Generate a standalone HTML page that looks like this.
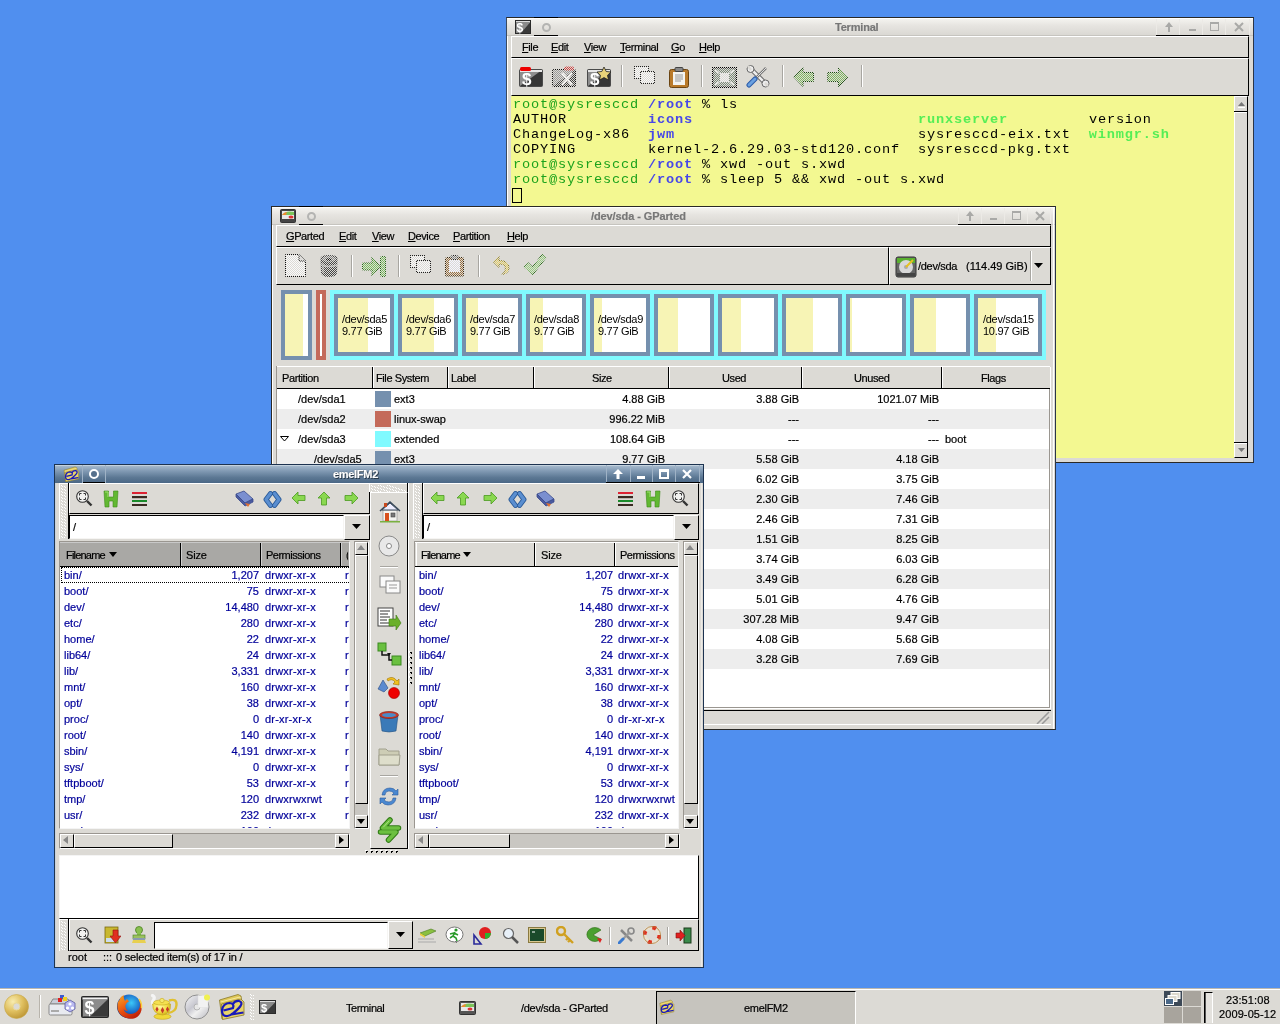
<!DOCTYPE html>
<html><head><meta charset="utf-8">
<style>
*{margin:0;padding:0;box-sizing:border-box}
html,body{width:1280px;height:1024px;overflow:hidden}
body{background:#508fef;font-family:"Liberation Sans",sans-serif;font-size:11px;color:#000;position:relative}
.a{position:absolute}
.win{position:absolute;background:#dcdad5;border:1px solid #1c1c1c;}
.win::before{content:"";position:absolute;left:0;top:0;right:0;bottom:0;border-left:1px solid #fff;border-top:1px solid #fff;pointer-events:none}
.tb{position:absolute;left:0;right:0;top:0;height:18px;background:linear-gradient(#f0efeb,#d8d6d1)}
.tbact{background:linear-gradient(#a6b8cc,#5d7894 60%,#4a6682)}
.bar{position:absolute;background:#dcdad5;border-top:1px solid #fff;border-left:1px solid #fff;border-bottom:1px solid #000;border-right:1px solid #000}
.mono{font-family:"Liberation Mono",monospace}
.t{position:absolute;white-space:pre;line-height:12px;-webkit-text-stroke:0.2px currentColor}
.m{letter-spacing:-0.4px}
u{text-decoration:underline;text-underline-offset:1px}
</style></head><body><div id="root" style="position:absolute;left:0;top:0;width:1280px;height:1024px;will-change:transform;background:#508fef"><svg width="0" height="0" style="position:absolute"><defs><pattern id="chk" width="2" height="2" patternUnits="userSpaceOnUse"><rect width="1" height="1" fill="#fff"/><rect x="1" y="1" width="1" height="1" fill="#fff"/></pattern><mask id="stip" maskUnits="userSpaceOnUse" x="0" y="0" width="64" height="64"><rect width="64" height="64" fill="url(#chk)"/></mask></defs></svg>

<!-- ================= TERMINAL ================= -->
<div class="a" style="left:506px;top:17px;width:748px;height:446px;background:#dcdad5;border:1px solid #2a2926;border-left-color:#3a4a60;border-right-color:#2a3548">
  <div class="a" style="left:0;top:0;width:1px;height:444px;background:#fff"></div>
  <div class="a" style="left:0;top:0;width:746px;height:18px;background:linear-gradient(#f4f3ef,#e6e4e0 40%,#d9d7d2);border-top:1px solid #fff"></div><div class="a" style="left:0;top:17px;width:746px;height:1px;background:#c6c4bf"></div>
  <svg class="a" style="left:8px;top:2px" width="16" height="14"><rect x="0.5" y="0.5" width="15" height="13" fill="#3a3a3a" stroke="#2a2a2a"/><rect x="1" y="1" width="14" height="1.5" fill="#ddd"/><polygon points="1,2.5 15,2.5 6,13 1,13" fill="#8a8a8a"/><text x="1.5" y="12" font-family="Liberation Sans" font-weight="bold" font-size="12" fill="#fff">$</text></svg>
  <div class="a" style="left:27px;top:-1px;width:24px;height:1px;background:#000"></div>
  <div class="a" style="left:27px;top:17px;width:24px;height:1px;background:#000"></div>
  <div class="a" style="left:35px;top:5px;width:9px;height:9px;border:2px solid #b4b4b2;border-radius:50%"></div>
  <div class="t" style="left:328px;top:3px;font-weight:bold;color:#777;letter-spacing:-0.2px">Terminal</div>
  <div class="a" style="left:649px;top:1px;width:93px;height:17px;border-bottom:1px solid #000"></div>
  <div class="a" style="left:649px;top:1px;width:1px;height:16px;background:#eceae6"></div><div class="a" style="left:672px;top:1px;width:1px;height:16px;background:#eceae6"></div><div class="a" style="left:742px;top:1px;width:1px;height:16px;background:#eceae6"></div>
  <div class="a" style="left:695px;top:1px;width:1px;height:16px;background:#eceae6"></div>
  <div class="a" style="left:718px;top:1px;width:1px;height:16px;background:#eceae6"></div>
  <svg class="a" style="left:656px;top:3px" width="12" height="12"><path d="M6 1 L10 6 L7 6 L7 11 L5 11 L5 6 L2 6 Z" fill="#a9a9a7"/></svg>
  <div class="a" style="left:682px;top:11px;width:7px;height:2px;background:#a9a9a7"></div>
  <div class="a" style="left:703px;top:4px;width:9px;height:9px;border:1px solid #a9a9a7;border-top-width:2px"></div>
  <svg class="a" style="left:726px;top:3px" width="12" height="12"><path d="M2 2 L10 10 M10 2 L2 10" stroke="#a9a9a7" stroke-width="2"/></svg>

  <!-- menubar -->
  <div class="a" style="left:4px;top:18px;width:738px;height:22px;border-top:1px solid #fff;border-left:1px solid #fff;border-bottom:1px solid #000;border-right:1px solid #000"></div>
  <div class="t m" style="left:15px;top:23px"><u>F</u>ile</div>
  <div class="t m" style="left:44px;top:23px"><u>E</u>dit</div>
  <div class="t m" style="left:77px;top:23px"><u>V</u>iew</div>
  <div class="t m" style="left:113px;top:23px"><u>T</u>erminal</div>
  <div class="t m" style="left:164px;top:23px"><u>G</u>o</div>
  <div class="t m" style="left:192px;top:23px"><u>H</u>elp</div>

  <!-- toolbar -->
  <div class="a" style="left:4px;top:40px;width:738px;height:38px;border-top:1px solid #fff;border-left:1px solid #fff;border-bottom:1px solid #000;border-right:1px solid #000"></div>
  <svg class="a" style="left:12px;top:49px" width="24" height="20"><rect x="0.5" y="2.5" width="23" height="17" rx="1" fill="#363636" stroke="#4a4a4a"/><polygon points="1,3 23,3 1,19" fill="#8e8e8e"/><rect x="1" y="3" width="22" height="2" fill="#e8e8e8"/><rect x="1" y="0" width="11" height="4" rx="1.5" fill="#e00"/><text x="3" y="18" font-family="Liberation Sans" font-weight="bold" font-size="17" fill="#fff">$</text></svg>
  <svg class="a" style="left:45px;top:48px" width="25" height="22"><g mask="url(#stip)"><rect x="0.5" y="3.5" width="23" height="17" rx="1" fill="#444" stroke="#111"/><polygon points="1,4 23,4 1,20" fill="#999"/><rect x="12" y="0.5" width="10" height="4" rx="1.5" fill="#d04040"/><path d="M10 7 L20 19 M20 7 L10 19" stroke="#fff" stroke-width="2.5"/></g></svg>
  <svg class="a" style="left:80px;top:49px" width="24" height="20"><rect x="0.5" y="2.5" width="23" height="17" rx="1" fill="#363636" stroke="#4a4a4a"/><polygon points="1,3 23,3 1,19" fill="#8e8e8e"/><rect x="1" y="3" width="22" height="2" fill="#e8e8e8"/><text x="3" y="18" font-family="Liberation Sans" font-weight="bold" font-size="17" fill="#fff">$</text><path d="M17 0 L19.2 4.5 L24 5 L20.5 8.3 L21.5 13 L17 10.6 L12.5 13 L13.5 8.3 L10 5 L14.8 4.5 Z" fill="#e8d27a" stroke="#222" stroke-width="0.8"/></svg>
  <div class="a" style="left:114px;top:47px;width:1px;height:22px;background:#a8a6a1;box-shadow:1px 0 #fff"></div>
  <svg class="a" style="left:127px;top:48px" width="23" height="20"><g mask="url(#stip)"><rect x="0.5" y="0.5" width="14" height="12" fill="#f8f8f8" stroke="#222"/><rect x="6.5" y="5.5" width="14" height="12" fill="#f8f8f8" stroke="#222"/></g></svg>
  <svg class="a" style="left:162px;top:49px" width="20" height="22"><rect x="0.5" y="2.5" width="19" height="18" rx="2" fill="#b97a2a" stroke="#6b4512"/><rect x="4" y="5" width="12" height="13" fill="#f4f4f0"/><path d="M6 8h8M6 10h8M6 12h8M6 14h6" stroke="#999"/><rect x="6" y="0.5" width="8" height="4" rx="1" fill="#888" stroke="#444"/></svg>
  <div class="a" style="left:194px;top:47px;width:1px;height:22px;background:#a8a6a1;box-shadow:1px 0 #fff"></div>
  <svg class="a" style="left:205px;top:49px" width="25" height="21"><g mask="url(#stip)"><rect x="0.5" y="0.5" width="24" height="20" fill="#555" stroke="#000"/><rect x="2" y="2" width="21" height="17" fill="#7a8a7a"/><rect x="8" y="6" width="9" height="9" fill="#eee"/><path d="M3 3l4 3M22 3l-4 3M3 18l4-3M22 18l-4-3" stroke="#eee" stroke-width="2"/></g></svg>
  <svg class="a" style="left:239px;top:47px" width="24" height="23"><path d="M5 4 L19 18" stroke="#666" stroke-width="4.5" stroke-linecap="round"/><path d="M5 4 L19 18" stroke="#eee" stroke-width="2.5" stroke-linecap="round"/><circle cx="4.5" cy="4" r="3.5" fill="#eee" stroke="#666"/><path d="M2 1 L5 5" stroke="#dcdad5" stroke-width="2.5"/><circle cx="19.5" cy="18.5" r="3.5" fill="#eee" stroke="#666"/><path d="M22 21 L19 18" stroke="#dcdad5" stroke-width="2.5"/><path d="M20 3 L8 15" stroke="#777" stroke-width="2.5"/><path d="M20 3 L8 15" stroke="#ddd" stroke-width="1"/><path d="M9 14 L3 20" stroke="#2a5aa8" stroke-width="5" stroke-linecap="round"/><path d="M9 14 L3 20" stroke="#6aa0e0" stroke-width="3" stroke-linecap="round"/></svg>
  <div class="a" style="left:275px;top:47px;width:1px;height:22px;background:#a8a6a1;box-shadow:1px 0 #fff"></div>
  <svg class="a" style="left:286px;top:49px" width="22" height="21"><g mask="url(#stip)"><path d="M0.8 10 L10 0.8 L10 5.5 L20.5 5.5 L20.5 14.5 L10 14.5 L10 19.5 Z" fill="#80b860" stroke="#1a4a10"/></g></svg>
  <svg class="a" style="left:320px;top:49px" width="22" height="21"><g mask="url(#stip)"><path d="M20.8 10 L11.5 0.8 L11.5 5.5 L0.8 5.5 L0.8 14.5 L11.5 14.5 L11.5 19.5 Z" fill="#80b860" stroke="#1a4a10"/></g></svg>
  <div class="a" style="left:354px;top:47px;width:1px;height:22px;background:#a8a6a1;box-shadow:1px 0 #fff"></div>

  <!-- text area -->
  <div class="a" style="left:4px;top:78px;width:723px;height:362px;background:#f3f891"></div>
  <div class="a mono" style="left:6px;top:79px;font-size:13.6px;line-height:15px;letter-spacing:0.84px;white-space:pre;color:#000"><span style="color:#1ca21c">root@sysresccd</span> <b style="color:#4848e8">/root</b> % ls
AUTHOR         <b style="color:#4848e8">icons</b>                         <b style="color:#55ee55">runxserver</b>         version
ChangeLog-x86  <b style="color:#4848e8">jwm</b>                           sysresccd-eix.txt  <b style="color:#55ee55">winmgr.sh</b>
COPYING        kernel-2.6.29.03-std120.conf  sysresccd-pkg.txt
<span style="color:#1ca21c">root@sysresccd</span> <b style="color:#4848e8">/root</b> % xwd -out s.xwd
<span style="color:#1ca21c">root@sysresccd</span> <b style="color:#4848e8">/root</b> % sleep 5 &amp;&amp; xwd -out s.xwd
</div>
  <div class="a" style="left:5px;top:170px;width:10px;height:15px;border:1px solid #000"></div>
  <!-- scrollbar -->
  <div class="a" style="left:727px;top:78px;width:14px;height:362px;background:#dcdad5;border-top:1px solid #fff;border-left:1px solid #fff;border-right:1px solid #000;border-bottom:1px solid #000"></div>
  <div class="a" style="left:727px;top:79px;width:14px;height:15px;border-bottom:1px solid #000"></div>
  <svg class="a" style="left:731px;top:84px" width="8" height="6"><path d="M0 4 L3.5 0 L7 4 Z" fill="#777"/><rect x="0" y="5" width="7" height="1" fill="#fff"/></svg>
  <div class="a" style="left:728px;top:94px;width:12px;height:1px;background:#fff"></div>
  <div class="a" style="left:727px;top:424px;width:14px;height:1px;background:#000"></div>
  <div class="a" style="left:728px;top:425px;width:12px;height:1px;background:#fff"></div>
  <svg class="a" style="left:731px;top:430px" width="8" height="6"><path d="M0 0 L7 0 L3.5 4 Z" fill="#777"/></svg>
</div>

<!-- ================= GPARTED ================= -->
<div class="a" style="left:271px;top:206px;width:785px;height:524px;background:#dcdad5;border:1px solid #2a2926;border-right-color:#2a3548">
  <div class="a" style="left:0;top:0;width:1px;height:522px;background:#fff"></div>
  <div class="a" style="left:0;top:0;width:783px;height:18px;background:linear-gradient(#f4f3ef,#e6e4e0 40%,#d9d7d2);border-top:1px solid #fff"></div><div class="a" style="left:0;top:17px;width:783px;height:1px;background:#c6c4bf"></div>
  <svg class="a" style="left:8px;top:2px" width="16" height="14"><rect x="0.5" y="0.5" width="15" height="13" rx="1" fill="#444" stroke="#333"/><rect x="2" y="2" width="12" height="8" fill="#e8e8e8"/><path d="M2 6 Q6 1 14 3 L14 6 Z" fill="#7cc45a"/><path d="M2 6 Q4 3 7 3 L6 6 Z" fill="#f08a30"/><ellipse cx="11" cy="8" rx="2.5" ry="1.5" fill="#d33"/></svg>
  <div class="a" style="left:27px;top:-1px;width:24px;height:1px;background:#000"></div>
  <div class="a" style="left:27px;top:17px;width:24px;height:1px;background:#000"></div>
  <div class="a" style="left:35px;top:5px;width:9px;height:9px;border:2px solid #b4b4b2;border-radius:50%"></div>
  <div class="t" style="left:319px;top:3px;font-weight:bold;color:#777;letter-spacing:-0.1px">/dev/sda - GParted</div>
  <div class="a" style="left:686px;top:1px;width:93px;height:17px;border-bottom:1px solid #000"></div>
  <div class="a" style="left:686px;top:1px;width:1px;height:16px;background:#eceae6"></div><div class="a" style="left:709px;top:1px;width:1px;height:16px;background:#eceae6"></div><div class="a" style="left:778px;top:1px;width:1px;height:16px;background:#eceae6"></div>
  <div class="a" style="left:732px;top:1px;width:1px;height:16px;background:#eceae6"></div>
  <div class="a" style="left:755px;top:1px;width:1px;height:16px;background:#eceae6"></div>
  <svg class="a" style="left:692px;top:3px" width="12" height="12"><path d="M6 1 L10 6 L7 6 L7 11 L5 11 L5 6 L2 6 Z" fill="#a9a9a7"/></svg>
  <div class="a" style="left:718px;top:11px;width:7px;height:2px;background:#a9a9a7"></div>
  <div class="a" style="left:740px;top:4px;width:9px;height:9px;border:1px solid #a9a9a7;border-top-width:2px"></div>
  <svg class="a" style="left:762px;top:3px" width="12" height="12"><path d="M2 2 L10 10 M10 2 L2 10" stroke="#a9a9a7" stroke-width="2"/></svg>

  <div class="a" style="left:4px;top:18px;width:775px;height:22px;border-top:1px solid #fff;border-left:1px solid #fff;border-bottom:1px solid #000;border-right:1px solid #000"></div>
  <div class="t m" style="left:14px;top:23px"><u>G</u>Parted</div>
  <div class="t m" style="left:67px;top:23px"><u>E</u>dit</div>
  <div class="t m" style="left:100px;top:23px"><u>V</u>iew</div>
  <div class="t m" style="left:136px;top:23px"><u>D</u>evice</div>
  <div class="t m" style="left:181px;top:23px"><u>P</u>artition</div>
  <div class="t m" style="left:235px;top:23px"><u>H</u>elp</div>

  <div class="a" style="left:4px;top:40px;width:613px;height:38px;border-top:1px solid #fff;border-left:1px solid #fff;border-bottom:1px solid #000;border-right:1px solid #000"></div>
  <div class="a" style="left:617px;top:40px;width:162px;height:38px;border-top:1px solid #fff;border-left:1px solid #fff;border-bottom:1px solid #000;border-right:1px solid #000"></div>
  <svg class="a" style="left:13px;top:47px" width="21" height="24"><g mask="url(#stip)"><path d="M0.5 0.5 L14 0.5 L20.5 7 L20.5 22.5 L0.5 22.5 Z" fill="#fafafa" stroke="#111"/><path d="M14 0.5 L14 7 L20.5 7" fill="#ddd" stroke="#111"/></g></svg>
  <svg class="a" style="left:47px;top:47px" width="21" height="24"><g mask="url(#stip)"><path d="M1.5 5 Q1 1 10 1 Q19 1 18.5 5 L18 19 Q17 23 10 23 Q3 23 2 19 Z" fill="#444"/><ellipse cx="10" cy="5" rx="7" ry="3" fill="#888"/><ellipse cx="10" cy="5.5" rx="3" ry="1.3" fill="#111"/><path d="M2 11 Q10 14 18 11" stroke="#aaa" stroke-width="1.5" fill="none"/><path d="M4 9 L4 19" stroke="#999" stroke-width="1.5"/></g></svg>
  <div class="a" style="left:79px;top:48px;width:1px;height:22px;background:#a8a6a1;box-shadow:1px 0 #fff"></div>
  <svg class="a" style="left:90px;top:49px" width="25" height="22"><g mask="url(#stip)"><path d="M0.5 7 L10 7 L10 1 L18 10.5 L10 20 L10 14 L0.5 14 Z" fill="#7cc060" stroke="#2a6a1a"/><rect x="18.5" y="0.5" width="5" height="20" rx="1" fill="#7cc060" stroke="#2a6a1a"/></g></svg>
  <div class="a" style="left:126px;top:48px;width:1px;height:22px;background:#a8a6a1;box-shadow:1px 0 #fff"></div>
  <svg class="a" style="left:138px;top:48px" width="23" height="19"><g mask="url(#stip)"><rect x="0.5" y="0.5" width="14" height="12" fill="#f8f8f8" stroke="#222"/><rect x="6.5" y="5.5" width="14" height="12" fill="#f8f8f8" stroke="#222"/></g></svg>
  <svg class="a" style="left:173px;top:48px" width="20" height="22"><g mask="url(#stip)"><rect x="0.5" y="2.5" width="18" height="18.5" rx="1" fill="#9a7040" stroke="#3a2a10"/><rect x="4" y="5" width="11" height="12" fill="#f4f4ff"/><rect x="6" y="0.5" width="7" height="4" rx="1.5" fill="#888" stroke="#222"/></g></svg>
  <div class="a" style="left:206px;top:48px;width:1px;height:22px;background:#a8a6a1;box-shadow:1px 0 #fff"></div>
  <svg class="a" style="left:221px;top:49px" width="17" height="20"><g mask="url(#stip)"><path d="M6 0.5 L0.5 6 L6 11.5 L6 8 Q12.5 8 12.5 12.5 Q12.5 16 9 18.5 Q16 17.5 16 12 Q16 4.5 6 4.5 Z" fill="#e8d060" stroke="#8a7a20"/></g></svg>
  <svg class="a" style="left:251px;top:46px" width="24" height="24"><g mask="url(#stip)"><path d="M0.8 14 L5 9.5 L9.5 14 L19.5 1 L23.2 4.5 L9.5 22 Z" fill="#98d080" stroke="#2a6a1a"/></g></svg>
  <svg class="a" style="left:623px;top:49px" width="22" height="22"><rect x="1" y="1" width="20" height="20" rx="2" fill="#666" stroke="#333"/><rect x="2" y="2" width="18" height="5" fill="#5ab030"/><circle cx="11" cy="11" r="7" fill="#d8d8d8"/><circle cx="11" cy="11" r="2" fill="#aaa"/><path d="M11 11 L18 4" stroke="#e8c020" stroke-width="2"/><rect x="2" y="17" width="18" height="3" fill="#444"/></svg>
  <div class="t" style="left:646px;top:53px;letter-spacing:-0.3px">/dev/sda</div><div class="t" style="left:694px;top:53px">(114.49 GiB)</div>
  <div class="a" style="left:758px;top:44px;width:1px;height:30px;background:#a8a6a1;box-shadow:1px 0 #fff"></div>
  <svg class="a" style="left:762px;top:56px" width="10" height="6"><path d="M0 0 L9 0 L4.5 5 Z" fill="#000"/></svg>

  <div class="a" style="left:9px;top:83px;width:31px;height:70px;border:4px solid #7590ae;background:linear-gradient(90deg,#f7f4b5 18px,#fff 18px)"></div>
<div class="a" style="left:44px;top:83px;width:10px;height:70px;border:4px solid #c46a5a;background:#fff"></div>
<div class="a" style="left:58px;top:83px;width:716px;height:70px;background:#80faff"></div>
<div class="a" style="left:62px;top:87px;width:60px;height:62px;border:4px solid #7590ae;background:linear-gradient(90deg,#f7f4b5 30px,#fff 30px)"></div>
<div class="a" style="left:126px;top:87px;width:60px;height:62px;border:4px solid #7590ae;background:linear-gradient(90deg,#f7f4b5 32px,#fff 32px)"></div>
<div class="a" style="left:190px;top:87px;width:60px;height:62px;border:4px solid #7590ae;background:linear-gradient(90deg,#f7f4b5 12px,#fff 12px)"></div>
<div class="a" style="left:254px;top:87px;width:60px;height:62px;border:4px solid #7590ae;background:linear-gradient(90deg,#f7f4b5 13px,#fff 13px)"></div>
<div class="a" style="left:318px;top:87px;width:60px;height:62px;border:4px solid #7590ae;background:linear-gradient(90deg,#f7f4b5 8px,#fff 8px)"></div>
<div class="a" style="left:382px;top:87px;width:60px;height:62px;border:4px solid #7590ae;background:linear-gradient(90deg,#f7f4b5 20px,#fff 20px)"></div>
<div class="a" style="left:446px;top:87px;width:60px;height:62px;border:4px solid #7590ae;background:linear-gradient(90deg,#f7f4b5 19px,#fff 19px)"></div>
<div class="a" style="left:510px;top:87px;width:60px;height:62px;border:4px solid #7590ae;background:linear-gradient(90deg,#f7f4b5 27px,#fff 27px)"></div>
<div class="a" style="left:574px;top:87px;width:60px;height:62px;border:4px solid #7590ae;background:linear-gradient(90deg,#f7f4b5 2px,#fff 2px)"></div>
<div class="a" style="left:638px;top:87px;width:60px;height:62px;border:4px solid #7590ae;background:linear-gradient(90deg,#f7f4b5 22px,#fff 22px)"></div>
<div class="a" style="left:702px;top:87px;width:68px;height:62px;border:4px solid #7590ae;background:linear-gradient(90deg,#f7f4b5 18px,#fff 18px)"></div>
<div class="a" style="left:70px;top:106px;line-height:12px;letter-spacing:-0.3px">/dev/sda5<br>9.77 GiB</div>
<div class="a" style="left:134px;top:106px;line-height:12px;letter-spacing:-0.3px">/dev/sda6<br>9.77 GiB</div>
<div class="a" style="left:198px;top:106px;line-height:12px;letter-spacing:-0.3px">/dev/sda7<br>9.77 GiB</div>
<div class="a" style="left:262px;top:106px;line-height:12px;letter-spacing:-0.3px">/dev/sda8<br>9.77 GiB</div>
<div class="a" style="left:326px;top:106px;line-height:12px;letter-spacing:-0.3px">/dev/sda9<br>9.77 GiB</div>
<div class="a" style="left:711px;top:106px;line-height:12px;letter-spacing:-0.3px">/dev/sda15<br>10.97 GiB</div>


  <!-- list -->
  <div class="a" style="left:4px;top:159px;width:774px;height:342px;background:#fff;border:1px solid #9a9690;box-shadow:1px 1px 0 #fff"></div>
  <div class="a" style="left:5px;top:159px;width:773px;height:23px;background:#dcdad5;border-top:1px solid #fff;border-bottom:1px solid #000"></div>
  <div class="a" style="left:100px;top:160px;width:1px;height:21px;background:#000;box-shadow:1px 0 #fff"></div>
  <div class="a" style="left:175px;top:160px;width:1px;height:21px;background:#000;box-shadow:1px 0 #fff"></div>
  <div class="a" style="left:261px;top:160px;width:1px;height:21px;background:#000;box-shadow:1px 0 #fff"></div>
  <div class="a" style="left:396px;top:160px;width:1px;height:21px;background:#000;box-shadow:1px 0 #fff"></div>
  <div class="a" style="left:529px;top:160px;width:1px;height:21px;background:#000;box-shadow:1px 0 #fff"></div>
  <div class="a" style="left:669px;top:160px;width:1px;height:21px;background:#000;box-shadow:1px 0 #fff"></div>
  <div class="t m" style="left:10px;top:165px">Partition</div>
  <div class="t m" style="left:104px;top:165px">File System</div>
  <div class="t m" style="left:179px;top:165px">Label</div>
  <div class="t m" style="left:320px;top:165px">Size</div>
  <div class="t m" style="left:450px;top:165px">Used</div>
  <div class="t m" style="left:582px;top:165px">Unused</div>
  <div class="t m" style="left:709px;top:165px">Flags</div>
  <div class="a" style="left:5px;top:182px;width:772px;height:20px;background:#fff"></div>
<div class="t" style="left:26px;top:186px">/dev/sda1</div><div class="a" style="left:103px;top:184px;width:16px;height:16px;background:#7590ae"></div><div class="t" style="left:122px;top:186px">ext3</div><div class="t" style="right:390px;top:186px;text-align:right">4.88 GiB</div><div class="t" style="right:256px;top:186px;text-align:right">3.88 GiB</div><div class="t" style="right:116px;top:186px;text-align:right">1021.07 MiB</div>
<div class="a" style="left:5px;top:202px;width:772px;height:20px;background:#ededed"></div>
<div class="t" style="left:26px;top:206px">/dev/sda2</div><div class="a" style="left:103px;top:204px;width:16px;height:16px;background:#c46a5a"></div><div class="t" style="left:122px;top:206px">linux-swap</div><div class="t" style="right:390px;top:206px;text-align:right">996.22 MiB</div><div class="t" style="right:256px;top:206px;text-align:right">---</div><div class="t" style="right:116px;top:206px;text-align:right">---</div>
<div class="a" style="left:5px;top:222px;width:772px;height:20px;background:#fff"></div>
<div class="t" style="left:26px;top:226px">/dev/sda3</div><div class="a" style="left:103px;top:224px;width:16px;height:16px;background:#80faff"></div><div class="t" style="left:122px;top:226px">extended</div><div class="t" style="right:390px;top:226px;text-align:right">108.64 GiB</div><div class="t" style="right:256px;top:226px;text-align:right">---</div><div class="t" style="right:116px;top:226px;text-align:right">---</div><div class="t" style="left:673px;top:226px">boot</div>
<div class="a" style="left:5px;top:242px;width:772px;height:20px;background:#ededed"></div>
<div class="t" style="left:42px;top:246px">/dev/sda5</div><div class="a" style="left:103px;top:244px;width:16px;height:16px;background:#7590ae"></div><div class="t" style="left:122px;top:246px">ext3</div><div class="t" style="right:390px;top:246px;text-align:right">9.77 GiB</div><div class="t" style="right:256px;top:246px;text-align:right">5.58 GiB</div><div class="t" style="right:116px;top:246px;text-align:right">4.18 GiB</div>
<div class="a" style="left:5px;top:262px;width:772px;height:20px;background:#fff"></div>
<div class="t" style="left:42px;top:266px">/dev/sda6</div><div class="a" style="left:103px;top:264px;width:16px;height:16px;background:#7590ae"></div><div class="t" style="left:122px;top:266px">ext3</div><div class="t" style="right:390px;top:266px;text-align:right">9.77 GiB</div><div class="t" style="right:256px;top:266px;text-align:right">6.02 GiB</div><div class="t" style="right:116px;top:266px;text-align:right">3.75 GiB</div>
<div class="a" style="left:5px;top:282px;width:772px;height:20px;background:#ededed"></div>
<div class="t" style="left:42px;top:286px">/dev/sda7</div><div class="a" style="left:103px;top:284px;width:16px;height:16px;background:#7590ae"></div><div class="t" style="left:122px;top:286px">ext3</div><div class="t" style="right:390px;top:286px;text-align:right">9.77 GiB</div><div class="t" style="right:256px;top:286px;text-align:right">2.30 GiB</div><div class="t" style="right:116px;top:286px;text-align:right">7.46 GiB</div>
<div class="a" style="left:5px;top:302px;width:772px;height:20px;background:#fff"></div>
<div class="t" style="left:42px;top:306px">/dev/sda8</div><div class="a" style="left:103px;top:304px;width:16px;height:16px;background:#7590ae"></div><div class="t" style="left:122px;top:306px">ext3</div><div class="t" style="right:390px;top:306px;text-align:right">9.77 GiB</div><div class="t" style="right:256px;top:306px;text-align:right">2.46 GiB</div><div class="t" style="right:116px;top:306px;text-align:right">7.31 GiB</div>
<div class="a" style="left:5px;top:322px;width:772px;height:20px;background:#ededed"></div>
<div class="t" style="left:42px;top:326px">/dev/sda9</div><div class="a" style="left:103px;top:324px;width:16px;height:16px;background:#7590ae"></div><div class="t" style="left:122px;top:326px">ext3</div><div class="t" style="right:390px;top:326px;text-align:right">9.77 GiB</div><div class="t" style="right:256px;top:326px;text-align:right">1.51 GiB</div><div class="t" style="right:116px;top:326px;text-align:right">8.25 GiB</div>
<div class="a" style="left:5px;top:342px;width:772px;height:20px;background:#fff"></div>
<div class="t" style="left:42px;top:346px">/dev/sda10</div><div class="a" style="left:103px;top:344px;width:16px;height:16px;background:#7590ae"></div><div class="t" style="left:122px;top:346px">ext3</div><div class="t" style="right:390px;top:346px;text-align:right">9.77 GiB</div><div class="t" style="right:256px;top:346px;text-align:right">3.74 GiB</div><div class="t" style="right:116px;top:346px;text-align:right">6.03 GiB</div>
<div class="a" style="left:5px;top:362px;width:772px;height:20px;background:#ededed"></div>
<div class="t" style="left:42px;top:366px">/dev/sda11</div><div class="a" style="left:103px;top:364px;width:16px;height:16px;background:#7590ae"></div><div class="t" style="left:122px;top:366px">ext3</div><div class="t" style="right:390px;top:366px;text-align:right">9.77 GiB</div><div class="t" style="right:256px;top:366px;text-align:right">3.49 GiB</div><div class="t" style="right:116px;top:366px;text-align:right">6.28 GiB</div>
<div class="a" style="left:5px;top:382px;width:772px;height:20px;background:#fff"></div>
<div class="t" style="left:42px;top:386px">/dev/sda12</div><div class="a" style="left:103px;top:384px;width:16px;height:16px;background:#7590ae"></div><div class="t" style="left:122px;top:386px">ext3</div><div class="t" style="right:390px;top:386px;text-align:right">9.77 GiB</div><div class="t" style="right:256px;top:386px;text-align:right">5.01 GiB</div><div class="t" style="right:116px;top:386px;text-align:right">4.76 GiB</div>
<div class="a" style="left:5px;top:402px;width:772px;height:20px;background:#ededed"></div>
<div class="t" style="left:42px;top:406px">/dev/sda13</div><div class="a" style="left:103px;top:404px;width:16px;height:16px;background:#7590ae"></div><div class="t" style="left:122px;top:406px">ext3</div><div class="t" style="right:390px;top:406px;text-align:right">9.77 GiB</div><div class="t" style="right:256px;top:406px;text-align:right">307.28 MiB</div><div class="t" style="right:116px;top:406px;text-align:right">9.47 GiB</div>
<div class="a" style="left:5px;top:422px;width:772px;height:20px;background:#fff"></div>
<div class="t" style="left:42px;top:426px">/dev/sda14</div><div class="a" style="left:103px;top:424px;width:16px;height:16px;background:#7590ae"></div><div class="t" style="left:122px;top:426px">ext3</div><div class="t" style="right:390px;top:426px;text-align:right">9.77 GiB</div><div class="t" style="right:256px;top:426px;text-align:right">4.08 GiB</div><div class="t" style="right:116px;top:426px;text-align:right">5.68 GiB</div>
<div class="a" style="left:5px;top:442px;width:772px;height:20px;background:#ededed"></div>
<div class="t" style="left:42px;top:446px">/dev/sda15</div><div class="a" style="left:103px;top:444px;width:16px;height:16px;background:#7590ae"></div><div class="t" style="left:122px;top:446px">ext3</div><div class="t" style="right:390px;top:446px;text-align:right">10.97 GiB</div><div class="t" style="right:256px;top:446px;text-align:right">3.28 GiB</div><div class="t" style="right:116px;top:446px;text-align:right">7.69 GiB</div>

  <svg class="a" style="left:8px;top:229px" width="10" height="7"><path d="M0.5 0.5 L8.5 0.5 L4.5 5 Z" fill="none" stroke="#000"/></svg>

  <!-- statusbar -->
  <div class="a" style="left:4px;top:503px;width:775px;height:15px;border-top:1px solid #000;border-bottom:1px solid #fff"></div>
  <svg class="a" style="left:764px;top:504px" width="14" height="13"><path d="M13 1 L1 13 M13 6 L6 13" stroke="#999" stroke-width="1.5"/></svg>
  <div class="a" style="left:781px;top:0;width:1px;height:522px;background:#fff"></div>
</div>

<!-- ================= EMELFM2 ================= -->
<div class="a" style="left:54px;top:464px;width:650px;height:504px;background:#dcdad5;border:1px solid #1d3350;"></div>
<div class="a" style="left:55px;top:465px;width:1px;height:502px;background:#c8d2dc"></div>
<div class="a" style="left:55px;top:465px;width:648px;height:18px;background:linear-gradient(#aabdd0,#7f98b2 35%,#5b7793 70%,#4b6785);"></div>
<div class="a" style="left:55px;top:465px;width:648px;height:1px;background:#c4d2de"></div>
<svg class="a" style="left:63px;top:466px" width="17" height="16" viewBox="0 0 28 27"><path d="M1.5 7 L20 1.5 L23 3 L25.5 20 L4 26 Z" fill="#e0c858" stroke="#8a7a28" stroke-width="0.8"/><path d="M2.5 9 L22 4 L24.5 21" fill="none" stroke="#f4e8a0" stroke-width="1"/><path d="M3.5 11 L23 6 L26 9 L26 22 L4.5 26.5 Z" fill="#e8d468" stroke="#8a7a28" stroke-width="0.8"/><path d="M5.5 17.5 L15 15 Q16.5 10 11.5 10 Q5 10.5 4 17 Q3.5 23.5 9.5 23 Q12.5 22.5 14.5 20.5" stroke="#1a1ab8" stroke-width="2.2" fill="none"/><path d="M14.5 11.5 Q17 7.5 21 8 Q25 9 22.5 13 Q20 16.5 13.5 21.5 L25.5 19.5" stroke="#1a1ab8" stroke-width="2.2" fill="none"/></svg>
<div class="a" style="left:82px;top:465px;width:1px;height:18px;background:#9fb2c6"></div>
<div class="a" style="left:105px;top:465px;width:1px;height:18px;background:#9fb2c6"></div>
<div class="a" style="left:83px;top:482px;width:22px;height:1px;background:#000"></div>
<div class="a" style="left:89px;top:469px;width:10px;height:10px;border:2.5px solid #fff;border-radius:50%;background:#56708c"></div>
<div class="t" style="left:333px;top:468px;font-weight:bold;color:#fff;letter-spacing:-0.3px;text-shadow:0 0 1px #203040,1px 1px 0 #2a3a4a">emelFM2</div>
<div class="a" style="left:606px;top:465px;width:1px;height:18px;background:#9fb2c6"></div>
<div class="a" style="left:630px;top:465px;width:1px;height:18px;background:#9fb2c6"></div>
<div class="a" style="left:652px;top:465px;width:1px;height:18px;background:#9fb2c6"></div>
<div class="a" style="left:675px;top:465px;width:1px;height:18px;background:#9fb2c6"></div>
<div class="a" style="left:699px;top:465px;width:1px;height:18px;background:#9fb2c6"></div>
<div class="a" style="left:606px;top:482px;width:94px;height:1px;background:#000"></div>
<svg class="a" style="left:612px;top:468px" width="12" height="12"><path d="M6 1 L11 6 L7.5 6 L7.5 11 L4.5 11 L4.5 6 L1 6 Z" fill="#fff"/></svg>
<div class="a" style="left:637px;top:476px;width:8px;height:3px;background:#fff"></div>
<div class="a" style="left:659px;top:469px;width:10px;height:10px;border:2px solid #fff;border-top-width:3px"></div>
<svg class="a" style="left:681px;top:468px" width="12" height="12"><path d="M2 2 L10 10 M10 2 L2 10" stroke="#fff" stroke-width="2.2"/></svg>
<div class="a" style="left:59px;top:483px;width:10px;height:56px;background:#dcdad5"></div>
<div class="a" style="left:59px;top:483px;width:1px;height:56px;background:#fff"></div>
<div class="a" style="left:59px;top:483px;width:9px;height:1px;background:#fff"></div>
<svg class="a" style="left:61px;top:485px" width="6" height="53"><path fill="#fff" d="M0 0h1v1h-1zM1 1h1v1h-1zM0 3h1v1h-1zM1 4h1v1h-1zM0 6h1v1h-1zM1 7h1v1h-1zM0 9h1v1h-1zM1 10h1v1h-1zM0 12h1v1h-1zM1 13h1v1h-1zM0 15h1v1h-1zM1 16h1v1h-1zM0 18h1v1h-1zM1 19h1v1h-1zM0 21h1v1h-1zM1 22h1v1h-1zM0 24h1v1h-1zM1 25h1v1h-1zM0 27h1v1h-1zM1 28h1v1h-1zM0 30h1v1h-1zM1 31h1v1h-1zM0 33h1v1h-1zM1 34h1v1h-1zM0 36h1v1h-1zM1 37h1v1h-1zM0 39h1v1h-1zM1 40h1v1h-1zM0 42h1v1h-1zM1 43h1v1h-1zM0 45h1v1h-1zM1 46h1v1h-1zM0 48h1v1h-1zM1 49h1v1h-1zM0 51h1v1h-1zM1 52h1v1h-1zM3 1h1v1h-1zM4 2h1v1h-1zM3 4h1v1h-1zM4 5h1v1h-1zM3 7h1v1h-1zM4 8h1v1h-1zM3 10h1v1h-1zM4 11h1v1h-1zM3 13h1v1h-1zM4 14h1v1h-1zM3 16h1v1h-1zM4 17h1v1h-1zM3 19h1v1h-1zM4 20h1v1h-1zM3 22h1v1h-1zM4 23h1v1h-1zM3 25h1v1h-1zM4 26h1v1h-1zM3 28h1v1h-1zM4 29h1v1h-1zM3 31h1v1h-1zM4 32h1v1h-1zM3 34h1v1h-1zM4 35h1v1h-1zM3 37h1v1h-1zM4 38h1v1h-1zM3 40h1v1h-1zM4 41h1v1h-1zM3 43h1v1h-1zM4 44h1v1h-1zM3 46h1v1h-1zM4 47h1v1h-1zM3 49h1v1h-1zM4 50h1v1h-1zM3 52h1v1h-1z"/></svg>
<div class="a" style="left:68px;top:483px;width:1px;height:56px;background:#000"></div>
<div class="a" style="left:69px;top:483px;width:301px;height:31px;background:#dcdad5;border-top:1px solid #fff;border-left:1px solid #fff;border-bottom:1px solid #000;border-right:1px solid #000;"></div>
<div class="a" style="left:69px;top:515px;width:275px;height:24px;background:#fff;border-top:1px solid #000;border-left:1px solid #000;border-bottom:1px solid #f6f5f3;border-right:1px solid #f6f5f3;"></div>
<div class="t" style="left:73px;top:521px;">/</div>
<div class="a" style="left:344px;top:515px;width:26px;height:25px;background:#dcdad5;border-top:1px solid #fff;border-left:1px solid #fff;border-bottom:1px solid #000;border-right:1px solid #000;"></div>
<svg class="a" style="left:352px;top:524px" width="10" height="6"><path d="M0 0 L9 0 L4.5 5 Z" fill="#000"/></svg>
<svg class="a" style="left:76px;top:490px" width="17" height="17"><circle cx="6.5" cy="6.5" r="5.8" fill="#f2f2f0" stroke="#333" stroke-width="1.1"/><path d="M3.5 5.5V3.5h2M7.5 3.5h2v2M9.5 7.5v2h-2M5.5 9.5h-2v-2" stroke="#333" stroke-width="1" fill="none"/><path d="M11 11 L15.5 15.5" stroke="#333" stroke-width="2.4"/></svg>
<svg class="a" style="left:103px;top:490px" width="16" height="18"><path d="M1 1 L5.5 1 L5.5 7 L10.5 7 L10.5 1 L15 1 L14 17 L10 17 L10 11 L6 11 L6 17 L2 17 Z" fill="#62b832" stroke="#3d8a1a" stroke-width="0.6"/><path d="M2 2h3v5" stroke="#9ee070" fill="none"/></svg>
<svg class="a" style="left:132px;top:492px" width="15" height="14"><rect x="0" y="0" width="15" height="2" fill="#d23"/><rect x="0" y="4" width="15" height="2.2" fill="#3a2a22"/><rect x="0" y="8" width="15" height="2" fill="#1a8a2a"/><rect x="0" y="12" width="15" height="2" fill="#3a2a22"/></svg>
<svg class="a" style="left:235px;top:490px" width="19" height="17"><path d="M1 4 L9 1 L18 9 L10 13 Z" fill="#7a8fd0" stroke="#3a4a8a" stroke-width="0.8"/><path d="M1 4 L1 7 L10 16 L18 12 L18 9 L10 13 Z" fill="#4a5aa0" stroke="#3a4a8a" stroke-width="0.8"/><path d="M10 13 L13 17 L15 14" fill="#e07030"/></svg>
<svg class="a" style="left:263px;top:491px" width="19" height="17"><g fill="none" stroke-linecap="round" stroke-linejoin="round"><path d="M7.5 2.5 L3 8.5 L7.5 14.5 M11.5 2.5 L16 8.5 L11.5 14.5" stroke="#2a5a98" stroke-width="5"/><path d="M7.5 2.5 L3 8.5 L7.5 14.5 M11.5 2.5 L16 8.5 L11.5 14.5" stroke="#5a8ed0" stroke-width="3.2"/></g></svg>
<svg class="a" style="left:291px;top:491px" width="15" height="14"><path d="M1 7 L7 1 L7 4.5 L14 4.5 L14 9.5 L7 9.5 L7 13 Z" fill="#8ad850" stroke="#4a9a20" stroke-width="0.8"/></svg>
<svg class="a" style="left:317px;top:491px" width="14" height="15"><path d="M7 1 L13 7 L9.5 7 L9.5 14 L4.5 14 L4.5 7 L1 7 Z" fill="#8ad850" stroke="#4a9a20" stroke-width="0.8"/></svg>
<svg class="a" style="left:344px;top:491px" width="15" height="14"><path d="M14 7 L8 1 L8 4.5 L1 4.5 L1 9.5 L8 9.5 L8 13 Z" fill="#8ad850" stroke="#4a9a20" stroke-width="0.8"/></svg>
<div class="a" style="left:59px;top:541px;width:291px;height:288px;background:#fff;border:1px solid #9a9690;border-right-color:#f4f4f4;border-bottom-color:#f4f4f4"></div>
<div class="a" style="left:60px;top:542px;width:289px;height:25px;background:#a9a8a5;border-top:1px solid #c8c8c8;border-bottom:1px solid #000"></div>
<div class="a" style="left:180px;top:543px;width:1px;height:23px;background:#000"></div>
<div class="a" style="left:181px;top:543px;width:1px;height:23px;background:#cfcfcf"></div>
<div class="a" style="left:260px;top:543px;width:1px;height:23px;background:#000"></div>
<div class="a" style="left:261px;top:543px;width:1px;height:23px;background:#cfcfcf"></div>
<div class="a" style="left:340px;top:543px;width:1px;height:23px;background:#000"></div>
<div class="a" style="left:341px;top:543px;width:1px;height:23px;background:#cfcfcf"></div>
<div class="t" style="left:66px;top:549px;letter-spacing:-0.8px">Filename</div>
<svg class="a" style="left:109px;top:552px" width="9" height="6"><path d="M0 0 L8 0 L4 5 Z" fill="#000"/></svg>
<div class="t" style="left:186px;top:549px;letter-spacing:-0.2px">Size</div>
<div class="t" style="left:266px;top:549px;letter-spacing:-0.5px">Permissions</div>
<div class="a" style="left:342px;top:543px;width:6px;height:22px;overflow:hidden"><div class="t" style="left:4px;top:6px">(</div></div>
<div class="a" style="left:60px;top:567px;width:289px;height:261px;overflow:hidden">
<div class="t" style="left:4px;top:2px;color:#00009a;-webkit-text-stroke:0.2px #00009a;">bin/</div><div class="t" style="left:-1px;width:200px;text-align:right;top:2px;color:#00009a;-webkit-text-stroke:0.2px #00009a;">1,207</div><div class="t" style="left:205px;top:2px;color:#00009a;-webkit-text-stroke:0.2px #00009a;letter-spacing:0.2px">drwxr-xr-x</div><div class="t" style="left:285px;top:2px;color:#00009a;-webkit-text-stroke:0.2px #00009a;">r</div>
<div class="t" style="left:4px;top:18px;color:#00009a;-webkit-text-stroke:0.2px #00009a;">boot/</div><div class="t" style="left:-1px;width:200px;text-align:right;top:18px;color:#00009a;-webkit-text-stroke:0.2px #00009a;">75</div><div class="t" style="left:205px;top:18px;color:#00009a;-webkit-text-stroke:0.2px #00009a;letter-spacing:0.2px">drwxr-xr-x</div><div class="t" style="left:285px;top:18px;color:#00009a;-webkit-text-stroke:0.2px #00009a;">r</div>
<div class="t" style="left:4px;top:34px;color:#00009a;-webkit-text-stroke:0.2px #00009a;">dev/</div><div class="t" style="left:-1px;width:200px;text-align:right;top:34px;color:#00009a;-webkit-text-stroke:0.2px #00009a;">14,480</div><div class="t" style="left:205px;top:34px;color:#00009a;-webkit-text-stroke:0.2px #00009a;letter-spacing:0.2px">drwxr-xr-x</div><div class="t" style="left:285px;top:34px;color:#00009a;-webkit-text-stroke:0.2px #00009a;">r</div>
<div class="t" style="left:4px;top:50px;color:#00009a;-webkit-text-stroke:0.2px #00009a;">etc/</div><div class="t" style="left:-1px;width:200px;text-align:right;top:50px;color:#00009a;-webkit-text-stroke:0.2px #00009a;">280</div><div class="t" style="left:205px;top:50px;color:#00009a;-webkit-text-stroke:0.2px #00009a;letter-spacing:0.2px">drwxr-xr-x</div><div class="t" style="left:285px;top:50px;color:#00009a;-webkit-text-stroke:0.2px #00009a;">r</div>
<div class="t" style="left:4px;top:66px;color:#00009a;-webkit-text-stroke:0.2px #00009a;">home/</div><div class="t" style="left:-1px;width:200px;text-align:right;top:66px;color:#00009a;-webkit-text-stroke:0.2px #00009a;">22</div><div class="t" style="left:205px;top:66px;color:#00009a;-webkit-text-stroke:0.2px #00009a;letter-spacing:0.2px">drwxr-xr-x</div><div class="t" style="left:285px;top:66px;color:#00009a;-webkit-text-stroke:0.2px #00009a;">r</div>
<div class="t" style="left:4px;top:82px;color:#00009a;-webkit-text-stroke:0.2px #00009a;">lib64/</div><div class="t" style="left:-1px;width:200px;text-align:right;top:82px;color:#00009a;-webkit-text-stroke:0.2px #00009a;">24</div><div class="t" style="left:205px;top:82px;color:#00009a;-webkit-text-stroke:0.2px #00009a;letter-spacing:0.2px">drwxr-xr-x</div><div class="t" style="left:285px;top:82px;color:#00009a;-webkit-text-stroke:0.2px #00009a;">r</div>
<div class="t" style="left:4px;top:98px;color:#00009a;-webkit-text-stroke:0.2px #00009a;">lib/</div><div class="t" style="left:-1px;width:200px;text-align:right;top:98px;color:#00009a;-webkit-text-stroke:0.2px #00009a;">3,331</div><div class="t" style="left:205px;top:98px;color:#00009a;-webkit-text-stroke:0.2px #00009a;letter-spacing:0.2px">drwxr-xr-x</div><div class="t" style="left:285px;top:98px;color:#00009a;-webkit-text-stroke:0.2px #00009a;">r</div>
<div class="t" style="left:4px;top:114px;color:#00009a;-webkit-text-stroke:0.2px #00009a;">mnt/</div><div class="t" style="left:-1px;width:200px;text-align:right;top:114px;color:#00009a;-webkit-text-stroke:0.2px #00009a;">160</div><div class="t" style="left:205px;top:114px;color:#00009a;-webkit-text-stroke:0.2px #00009a;letter-spacing:0.2px">drwxr-xr-x</div><div class="t" style="left:285px;top:114px;color:#00009a;-webkit-text-stroke:0.2px #00009a;">r</div>
<div class="t" style="left:4px;top:130px;color:#00009a;-webkit-text-stroke:0.2px #00009a;">opt/</div><div class="t" style="left:-1px;width:200px;text-align:right;top:130px;color:#00009a;-webkit-text-stroke:0.2px #00009a;">38</div><div class="t" style="left:205px;top:130px;color:#00009a;-webkit-text-stroke:0.2px #00009a;letter-spacing:0.2px">drwxr-xr-x</div><div class="t" style="left:285px;top:130px;color:#00009a;-webkit-text-stroke:0.2px #00009a;">r</div>
<div class="t" style="left:4px;top:146px;color:#00009a;-webkit-text-stroke:0.2px #00009a;">proc/</div><div class="t" style="left:-1px;width:200px;text-align:right;top:146px;color:#00009a;-webkit-text-stroke:0.2px #00009a;">0</div><div class="t" style="left:205px;top:146px;color:#00009a;-webkit-text-stroke:0.2px #00009a;letter-spacing:0.2px">dr-xr-xr-x</div><div class="t" style="left:285px;top:146px;color:#00009a;-webkit-text-stroke:0.2px #00009a;">r</div>
<div class="t" style="left:4px;top:162px;color:#00009a;-webkit-text-stroke:0.2px #00009a;">root/</div><div class="t" style="left:-1px;width:200px;text-align:right;top:162px;color:#00009a;-webkit-text-stroke:0.2px #00009a;">140</div><div class="t" style="left:205px;top:162px;color:#00009a;-webkit-text-stroke:0.2px #00009a;letter-spacing:0.2px">drwxr-xr-x</div><div class="t" style="left:285px;top:162px;color:#00009a;-webkit-text-stroke:0.2px #00009a;">r</div>
<div class="t" style="left:4px;top:178px;color:#00009a;-webkit-text-stroke:0.2px #00009a;">sbin/</div><div class="t" style="left:-1px;width:200px;text-align:right;top:178px;color:#00009a;-webkit-text-stroke:0.2px #00009a;">4,191</div><div class="t" style="left:205px;top:178px;color:#00009a;-webkit-text-stroke:0.2px #00009a;letter-spacing:0.2px">drwxr-xr-x</div><div class="t" style="left:285px;top:178px;color:#00009a;-webkit-text-stroke:0.2px #00009a;">r</div>
<div class="t" style="left:4px;top:194px;color:#00009a;-webkit-text-stroke:0.2px #00009a;">sys/</div><div class="t" style="left:-1px;width:200px;text-align:right;top:194px;color:#00009a;-webkit-text-stroke:0.2px #00009a;">0</div><div class="t" style="left:205px;top:194px;color:#00009a;-webkit-text-stroke:0.2px #00009a;letter-spacing:0.2px">drwxr-xr-x</div><div class="t" style="left:285px;top:194px;color:#00009a;-webkit-text-stroke:0.2px #00009a;">r</div>
<div class="t" style="left:4px;top:210px;color:#00009a;-webkit-text-stroke:0.2px #00009a;">tftpboot/</div><div class="t" style="left:-1px;width:200px;text-align:right;top:210px;color:#00009a;-webkit-text-stroke:0.2px #00009a;">53</div><div class="t" style="left:205px;top:210px;color:#00009a;-webkit-text-stroke:0.2px #00009a;letter-spacing:0.2px">drwxr-xr-x</div><div class="t" style="left:285px;top:210px;color:#00009a;-webkit-text-stroke:0.2px #00009a;">r</div>
<div class="t" style="left:4px;top:226px;color:#00009a;-webkit-text-stroke:0.2px #00009a;">tmp/</div><div class="t" style="left:-1px;width:200px;text-align:right;top:226px;color:#00009a;-webkit-text-stroke:0.2px #00009a;">120</div><div class="t" style="left:205px;top:226px;color:#00009a;-webkit-text-stroke:0.2px #00009a;letter-spacing:0.2px">drwxrwxrwt</div><div class="t" style="left:285px;top:226px;color:#00009a;-webkit-text-stroke:0.2px #00009a;">r</div>
<div class="t" style="left:4px;top:242px;color:#00009a;-webkit-text-stroke:0.2px #00009a;">usr/</div><div class="t" style="left:-1px;width:200px;text-align:right;top:242px;color:#00009a;-webkit-text-stroke:0.2px #00009a;">232</div><div class="t" style="left:205px;top:242px;color:#00009a;-webkit-text-stroke:0.2px #00009a;letter-spacing:0.2px">drwxr-xr-x</div><div class="t" style="left:285px;top:242px;color:#00009a;-webkit-text-stroke:0.2px #00009a;">r</div>
<div class="t" style="left:4px;top:258px;color:#00009a;-webkit-text-stroke:0.2px #00009a;">var/</div><div class="t" style="left:-1px;width:200px;text-align:right;top:258px;color:#00009a;-webkit-text-stroke:0.2px #00009a;">100</div><div class="t" style="left:205px;top:258px;color:#00009a;-webkit-text-stroke:0.2px #00009a;letter-spacing:0.2px">drwxr-xr-x</div><div class="t" style="left:285px;top:258px;color:#00009a;-webkit-text-stroke:0.2px #00009a;">r</div>
</div>
<div class="a" style="left:61px;top:567px;width:288px;height:16px;border:1px dotted #000;border-right:none"></div>
<div class="a" style="left:354px;top:541px;width:15px;height:288px;background:#c9c7c2;border:1px solid #9a9690;border-right-color:#fff;border-bottom-color:#fff"></div>
<div class="a" style="left:355px;top:542px;width:13px;height:13px;background:#dcdad5;border-top:1px solid #fff;border-left:1px solid #fff;border-bottom:1px solid #000;border-right:1px solid #000;"></div>
<svg class="a" style="left:357px;top:545px" width="9" height="6"><path d="M0 5 L4 0 L8 5 Z" fill="#888"/></svg>
<div class="a" style="left:355px;top:555px;width:13px;height:249px;background:#dcdad5;border-top:1px solid #fff;border-left:1px solid #fff;border-bottom:1px solid #000;border-right:1px solid #000;"></div>
<div class="a" style="left:355px;top:815px;width:13px;height:13px;background:#dcdad5;border-top:1px solid #fff;border-left:1px solid #fff;border-bottom:1px solid #000;border-right:1px solid #000;"></div>
<svg class="a" style="left:357px;top:819px" width="9" height="6"><path d="M0 0 L8 0 L4 5 Z" fill="#000"/></svg>
<div class="a" style="left:59px;top:833px;width:291px;height:16px;background:#c9c7c2;border:1px solid #9a9690;border-right-color:#fff;border-bottom-color:#fff"></div>
<div class="a" style="left:60px;top:834px;width:14px;height:14px;background:#dcdad5;border-top:1px solid #fff;border-left:1px solid #fff;border-bottom:1px solid #000;border-right:1px solid #000;"></div>
<svg class="a" style="left:63px;top:836px" width="6" height="9"><path d="M5 0 L0 4 L5 8 Z" fill="#888"/></svg>
<div class="a" style="left:74px;top:834px;width:99px;height:14px;background:#dcdad5;border-top:1px solid #fff;border-left:1px solid #fff;border-bottom:1px solid #000;border-right:1px solid #000;"></div>
<div class="a" style="left:335px;top:834px;width:14px;height:14px;background:#dcdad5;border-top:1px solid #fff;border-left:1px solid #fff;border-bottom:1px solid #000;border-right:1px solid #000;"></div>
<svg class="a" style="left:339px;top:836px" width="6" height="9"><path d="M0 0 L5 4 L0 8 Z" fill="#000"/></svg>
<div class="a" style="left:369px;top:483px;width:39px;height:10px;background:#dcdad5"></div>
<div class="a" style="left:369px;top:483px;width:38px;height:1px;background:#fff"></div>
<div class="a" style="left:369px;top:483px;width:1px;height:9px;background:#fff"></div>
<svg class="a" style="left:371px;top:485px" width="35" height="7"><path fill="#fff" d="M0 0h1v1h-1zM1 1h1v1h-1zM0 3h1v1h-1zM1 4h1v1h-1zM0 6h1v1h-1zM3 1h1v1h-1zM4 2h1v1h-1zM3 4h1v1h-1zM4 5h1v1h-1zM7 0h1v1h-1zM6 2h1v1h-1zM7 3h1v1h-1zM6 5h1v1h-1zM7 6h1v1h-1zM9 0h1v1h-1zM10 1h1v1h-1zM9 3h1v1h-1zM10 4h1v1h-1zM9 6h1v1h-1zM12 1h1v1h-1zM13 2h1v1h-1zM12 4h1v1h-1zM13 5h1v1h-1zM16 0h1v1h-1zM15 2h1v1h-1zM16 3h1v1h-1zM15 5h1v1h-1zM16 6h1v1h-1zM18 0h1v1h-1zM19 1h1v1h-1zM18 3h1v1h-1zM19 4h1v1h-1zM18 6h1v1h-1zM21 1h1v1h-1zM22 2h1v1h-1zM21 4h1v1h-1zM22 5h1v1h-1zM24 2h1v1h-1zM25 3h1v1h-1zM24 5h1v1h-1zM25 6h1v1h-1zM27 3h1v1h-1zM28 4h1v1h-1zM27 6h1v1h-1zM30 4h1v1h-1zM31 5h1v1h-1zM33 5h1v1h-1zM34 6h1v1h-1z"/></svg>
<div class="a" style="left:369px;top:492px;width:39px;height:1px;background:#000"></div>
<div class="a" style="left:407px;top:483px;width:1px;height:10px;background:#000"></div>
<div class="a" style="left:370px;top:492px;width:38px;height:357px;background:#dcdad5;border-top:1px solid #fff;border-left:1px solid #fff;border-bottom:1px solid #000;border-right:1px solid #000;"></div>
<svg class="a" style="left:379px;top:501px" width="22" height="22"><path d="M1 10 L11 1 L21 10" fill="none" stroke="#3a4a5a" stroke-width="1.5"/><rect x="4" y="9" width="14" height="11" fill="#f4f4f0" stroke="#888" stroke-width="0.6"/><path d="M11 2 L3 9 L19 9 Z" fill="#eef" stroke="#3a4a5a"/><rect x="5" y="2" width="3" height="4" fill="#c84a20"/><rect x="6" y="12" width="4" height="8" fill="#d8501c"/><rect x="12" y="12" width="4" height="4" fill="#777" stroke="#444" stroke-width="0.6"/><rect x="1" y="20" width="20" height="1.5" fill="#7ab040"/></svg>
<svg class="a" style="left:378px;top:535px" width="23" height="23"><circle cx="11" cy="11" r="10" fill="#e8e8e8" stroke="#8a8a8a"/><circle cx="11" cy="11" r="2.5" fill="#fff" stroke="#888"/></svg>
<div class="a" style="left:380px;top:566px;width:18px;height:1px;background:#a8a6a1;box-shadow:0 1px #fff"></div>
<svg class="a" style="left:379px;top:575px" width="22" height="19"><rect x="1" y="1" width="14" height="11" fill="#fafafa" stroke="#888"/><rect x="7" y="6" width="14" height="12" fill="#fafafa" stroke="#888"/><path d="M10 10h8M10 13h8" stroke="#999"/></svg>
<svg class="a" style="left:377px;top:607px" width="25" height="25"><rect x="1" y="1" width="15" height="18" fill="#fff" stroke="#444"/><path d="M3 4h10M3 7h8M3 10h10M3 13h7M3 16h9" stroke="#333"/><path d="M12 12 L19 12 L19 8 L24 16 L19 23 L19 19 L12 19 Z" fill="#6ab02a" stroke="#3a7a10" stroke-width="0.6"/></svg>
<svg class="a" style="left:377px;top:642px" width="25" height="24"><rect x="1" y="1" width="8" height="8" fill="#6ac040" stroke="#3a8a20"/><rect x="15" y="14" width="9" height="9" fill="#6ac040" stroke="#3a8a20"/><path d="M5 9 L5 13 L12 13 L12 18 L15 18" stroke="#111" stroke-width="1.5" fill="none"/><path d="M10 11 L14 11 L12 14 Z" fill="#111"/></svg>
<svg class="a" style="left:377px;top:675px" width="24" height="25"><path d="M6 5 L1 14 L7 17 L11 13 Z" fill="#5a8ad0" stroke="#2a4a80" stroke-width="0.6"/><circle cx="17" cy="18" r="5.5" fill="#e00" stroke="#900" stroke-width="0.6"/><path d="M10 4 Q16 0 20 6 L22 4 L22 10 L16 9 L18 7 Q15 3 11 6 Z" fill="#f0c020" stroke="#a07000" stroke-width="0.6"/></svg>
<svg class="a" style="left:378px;top:710px" width="22" height="23"><path d="M2 5 L20 5 L18 21 Q11 23 4 21 Z" fill="#3a7ab8" stroke="#245080" stroke-width="0.6"/><ellipse cx="11" cy="5" rx="9.5" ry="3.5" fill="#c83a2a" stroke="#801a10" stroke-width="0.6"/><ellipse cx="11" cy="5" rx="7" ry="2" fill="#4a8ac8"/></svg>
<svg class="a" style="left:378px;top:746px" width="23" height="20" opacity="0.7"><path d="M1 3 L8 3 L10 5 L21 5 L21 19 L1 19 Z" fill="#c8c8a8" stroke="#888870"/><path d="M1 9 L22 9 L21 19 L1 19 Z" fill="#e0e0c8" stroke="#888870"/></svg>
<div class="a" style="left:380px;top:775px;width:18px;height:1px;background:#a8a6a1;box-shadow:0 1px #fff"></div>
<svg class="a" style="left:379px;top:786px" width="20" height="21"><path d="M3 9 Q4 2 11 2 Q15 2 17 5 L19 3 L19 9 L13 9 L15 7 Q13 5 10 5 Q6 5 6 9 Z" fill="#4a88d0" stroke="#2a5aa0" stroke-width="0.6"/><path d="M17 12 Q16 19 9 19 Q5 19 3 16 L1 18 L1 12 L7 12 L5 14 Q7 16 10 16 Q14 16 14 12 Z" fill="#4a88d0" stroke="#2a5aa0" stroke-width="0.6"/></svg>
<svg class="a" style="left:377px;top:817px" width="25" height="26"><g fill="none" stroke-linecap="round" stroke-linejoin="round"><path d="M13 3 L5.5 11 L21.5 11 M3.5 15 L19 15 L11.5 23" stroke="#2f7a14" stroke-width="5.5"/><path d="M13 3 L5.5 11 L21.5 11 M3.5 15 L19 15 L11.5 23" stroke="#6cc040" stroke-width="3.5"/><path d="M12 4 L6.5 10" stroke="#a8e080" stroke-width="1"/></g></svg>
<svg class="a" style="left:365px;top:850px" width="34" height="3"><path fill="#000" d="M1 1h2v1h-1v1h-1zM6 1h2v1h-1v1h-1zM11 1h2v1h-1v1h-1zM16 1h2v1h-1v1h-1zM21 1h2v1h-1v1h-1zM26 1h2v1h-1v1h-1zM31 1h2v1h-1v1h-1z"/><path fill="#fff" d="M0 0h2v1h-2zM5 0h2v1h-2zM10 0h2v1h-2zM15 0h2v1h-2zM20 0h2v1h-2zM25 0h2v1h-2zM30 0h2v1h-2z"/></svg>
<svg class="a" style="left:409px;top:651px" width="3" height="35"><path fill="#000" d="M1 1h2v2h-1v-1h-1zM1 6h2v2h-1v-1h-1zM1 11h2v2h-1v-1h-1zM1 16h2v2h-1v-1h-1zM1 21h2v2h-1v-1h-1zM1 26h2v2h-1v-1h-1zM1 31h2v2h-1v-1h-1z"/><path fill="#fff" d="M0 0h1v2h-1zM0 5h1v2h-1zM0 10h1v2h-1zM0 15h1v2h-1zM0 20h1v2h-1zM0 25h1v2h-1zM0 30h1v2h-1z"/></svg>
<div class="a" style="left:408px;top:483px;width:1px;height:366px;background:#fff"></div>
<div class="a" style="left:413px;top:483px;width:10px;height:56px;background:#dcdad5"></div>
<div class="a" style="left:413px;top:483px;width:1px;height:56px;background:#fff"></div>
<div class="a" style="left:413px;top:483px;width:9px;height:1px;background:#fff"></div>
<svg class="a" style="left:415px;top:485px" width="6" height="53"><path fill="#fff" d="M0 0h1v1h-1zM1 1h1v1h-1zM0 3h1v1h-1zM1 4h1v1h-1zM0 6h1v1h-1zM1 7h1v1h-1zM0 9h1v1h-1zM1 10h1v1h-1zM0 12h1v1h-1zM1 13h1v1h-1zM0 15h1v1h-1zM1 16h1v1h-1zM0 18h1v1h-1zM1 19h1v1h-1zM0 21h1v1h-1zM1 22h1v1h-1zM0 24h1v1h-1zM1 25h1v1h-1zM0 27h1v1h-1zM1 28h1v1h-1zM0 30h1v1h-1zM1 31h1v1h-1zM0 33h1v1h-1zM1 34h1v1h-1zM0 36h1v1h-1zM1 37h1v1h-1zM0 39h1v1h-1zM1 40h1v1h-1zM0 42h1v1h-1zM1 43h1v1h-1zM0 45h1v1h-1zM1 46h1v1h-1zM0 48h1v1h-1zM1 49h1v1h-1zM0 51h1v1h-1zM1 52h1v1h-1zM3 1h1v1h-1zM4 2h1v1h-1zM3 4h1v1h-1zM4 5h1v1h-1zM3 7h1v1h-1zM4 8h1v1h-1zM3 10h1v1h-1zM4 11h1v1h-1zM3 13h1v1h-1zM4 14h1v1h-1zM3 16h1v1h-1zM4 17h1v1h-1zM3 19h1v1h-1zM4 20h1v1h-1zM3 22h1v1h-1zM4 23h1v1h-1zM3 25h1v1h-1zM4 26h1v1h-1zM3 28h1v1h-1zM4 29h1v1h-1zM3 31h1v1h-1zM4 32h1v1h-1zM3 34h1v1h-1zM4 35h1v1h-1zM3 37h1v1h-1zM4 38h1v1h-1zM3 40h1v1h-1zM4 41h1v1h-1zM3 43h1v1h-1zM4 44h1v1h-1zM3 46h1v1h-1zM4 47h1v1h-1zM3 49h1v1h-1zM4 50h1v1h-1zM3 52h1v1h-1z"/></svg>
<div class="a" style="left:422px;top:483px;width:1px;height:56px;background:#000"></div>
<div class="a" style="left:423px;top:483px;width:276px;height:31px;background:#dcdad5;border-top:1px solid #fff;border-left:1px solid #fff;border-bottom:1px solid #000;border-right:1px solid #000;"></div>
<svg class="a" style="left:430px;top:491px" width="15" height="14"><path d="M1 7 L7 1 L7 4.5 L14 4.5 L14 9.5 L7 9.5 L7 13 Z" fill="#8ad850" stroke="#4a9a20" stroke-width="0.8"/></svg>
<svg class="a" style="left:456px;top:491px" width="14" height="15"><path d="M7 1 L13 7 L9.5 7 L9.5 14 L4.5 14 L4.5 7 L1 7 Z" fill="#8ad850" stroke="#4a9a20" stroke-width="0.8"/></svg>
<svg class="a" style="left:483px;top:491px" width="15" height="14"><path d="M14 7 L8 1 L8 4.5 L1 4.5 L1 9.5 L8 9.5 L8 13 Z" fill="#8ad850" stroke="#4a9a20" stroke-width="0.8"/></svg>
<svg class="a" style="left:508px;top:491px" width="19" height="17"><g fill="none" stroke-linecap="round" stroke-linejoin="round"><path d="M7.5 2.5 L3 8.5 L7.5 14.5 M11.5 2.5 L16 8.5 L11.5 14.5" stroke="#2a5a98" stroke-width="5"/><path d="M7.5 2.5 L3 8.5 L7.5 14.5 M11.5 2.5 L16 8.5 L11.5 14.5" stroke="#5a8ed0" stroke-width="3.2"/></g></svg>
<svg class="a" style="left:536px;top:490px" width="19" height="17"><path d="M1 4 L9 1 L18 9 L10 13 Z" fill="#7a8fd0" stroke="#3a4a8a" stroke-width="0.8"/><path d="M1 4 L1 7 L10 16 L18 12 L18 9 L10 13 Z" fill="#4a5aa0" stroke="#3a4a8a" stroke-width="0.8"/><path d="M10 13 L13 17 L15 14" fill="#e07030"/></svg>
<svg class="a" style="left:618px;top:492px" width="15" height="14"><rect x="0" y="0" width="15" height="2" fill="#d23"/><rect x="0" y="4" width="15" height="2.2" fill="#3a2a22"/><rect x="0" y="8" width="15" height="2" fill="#1a8a2a"/><rect x="0" y="12" width="15" height="2" fill="#3a2a22"/></svg>
<svg class="a" style="left:645px;top:490px" width="16" height="18"><path d="M1 1 L5.5 1 L5.5 7 L10.5 7 L10.5 1 L15 1 L14 17 L10 17 L10 11 L6 11 L6 17 L2 17 Z" fill="#62b832" stroke="#3d8a1a" stroke-width="0.6"/><path d="M2 2h3v5" stroke="#9ee070" fill="none"/></svg>
<svg class="a" style="left:672px;top:490px" width="17" height="17"><circle cx="6.5" cy="6.5" r="5.8" fill="#f2f2f0" stroke="#333" stroke-width="1.1"/><path d="M3.5 5.5V3.5h2M7.5 3.5h2v2M9.5 7.5v2h-2M5.5 9.5h-2v-2" stroke="#333" stroke-width="1" fill="none"/><path d="M11 11 L15.5 15.5" stroke="#333" stroke-width="2.4"/></svg>
<div class="a" style="left:423px;top:515px;width:251px;height:24px;background:#fff;border-top:1px solid #000;border-left:1px solid #000;border-bottom:1px solid #f6f5f3;border-right:1px solid #f6f5f3;"></div>
<div class="t" style="left:427px;top:521px;">/</div>
<div class="a" style="left:674px;top:515px;width:25px;height:25px;background:#dcdad5;border-top:1px solid #fff;border-left:1px solid #fff;border-bottom:1px solid #000;border-right:1px solid #000;"></div>
<svg class="a" style="left:682px;top:524px" width="10" height="6"><path d="M0 0 L9 0 L4.5 5 Z" fill="#000"/></svg>
<div class="a" style="left:414px;top:541px;width:265px;height:288px;background:#fff;border:1px solid #9a9690;border-right-color:#f4f4f4;border-bottom-color:#f4f4f4"></div>
<div class="a" style="left:415px;top:542px;width:263px;height:25px;background:#dcdad5;border-top:1px solid #fff;border-bottom:1px solid #000"></div>
<div class="a" style="left:534px;top:543px;width:1px;height:23px;background:#000"></div>
<div class="a" style="left:535px;top:543px;width:1px;height:23px;background:#fff"></div>
<div class="a" style="left:614px;top:543px;width:1px;height:23px;background:#000"></div>
<div class="a" style="left:615px;top:543px;width:1px;height:23px;background:#fff"></div>
<div class="a" style="left:416px;top:543px;width:1px;height:23px;background:#fff"></div>
<div class="t" style="left:421px;top:549px;letter-spacing:-0.8px">Filename</div>
<svg class="a" style="left:463px;top:552px" width="9" height="6"><path d="M0 0 L8 0 L4 5 Z" fill="#000"/></svg>
<div class="t" style="left:541px;top:549px;letter-spacing:-0.2px">Size</div>
<div class="t" style="left:620px;top:549px;letter-spacing:-0.5px">Permissions</div>
<div class="a" style="left:415px;top:567px;width:263px;height:261px;overflow:hidden">
<div class="t" style="left:4px;top:2px;color:#00009a;-webkit-text-stroke:0.2px #00009a;">bin/</div><div class="t" style="left:-2px;width:200px;text-align:right;top:2px;color:#00009a;-webkit-text-stroke:0.2px #00009a;">1,207</div><div class="t" style="left:203px;top:2px;color:#00009a;-webkit-text-stroke:0.2px #00009a;letter-spacing:0.2px">drwxr-xr-x</div>
<div class="t" style="left:4px;top:18px;color:#00009a;-webkit-text-stroke:0.2px #00009a;">boot/</div><div class="t" style="left:-2px;width:200px;text-align:right;top:18px;color:#00009a;-webkit-text-stroke:0.2px #00009a;">75</div><div class="t" style="left:203px;top:18px;color:#00009a;-webkit-text-stroke:0.2px #00009a;letter-spacing:0.2px">drwxr-xr-x</div>
<div class="t" style="left:4px;top:34px;color:#00009a;-webkit-text-stroke:0.2px #00009a;">dev/</div><div class="t" style="left:-2px;width:200px;text-align:right;top:34px;color:#00009a;-webkit-text-stroke:0.2px #00009a;">14,480</div><div class="t" style="left:203px;top:34px;color:#00009a;-webkit-text-stroke:0.2px #00009a;letter-spacing:0.2px">drwxr-xr-x</div>
<div class="t" style="left:4px;top:50px;color:#00009a;-webkit-text-stroke:0.2px #00009a;">etc/</div><div class="t" style="left:-2px;width:200px;text-align:right;top:50px;color:#00009a;-webkit-text-stroke:0.2px #00009a;">280</div><div class="t" style="left:203px;top:50px;color:#00009a;-webkit-text-stroke:0.2px #00009a;letter-spacing:0.2px">drwxr-xr-x</div>
<div class="t" style="left:4px;top:66px;color:#00009a;-webkit-text-stroke:0.2px #00009a;">home/</div><div class="t" style="left:-2px;width:200px;text-align:right;top:66px;color:#00009a;-webkit-text-stroke:0.2px #00009a;">22</div><div class="t" style="left:203px;top:66px;color:#00009a;-webkit-text-stroke:0.2px #00009a;letter-spacing:0.2px">drwxr-xr-x</div>
<div class="t" style="left:4px;top:82px;color:#00009a;-webkit-text-stroke:0.2px #00009a;">lib64/</div><div class="t" style="left:-2px;width:200px;text-align:right;top:82px;color:#00009a;-webkit-text-stroke:0.2px #00009a;">24</div><div class="t" style="left:203px;top:82px;color:#00009a;-webkit-text-stroke:0.2px #00009a;letter-spacing:0.2px">drwxr-xr-x</div>
<div class="t" style="left:4px;top:98px;color:#00009a;-webkit-text-stroke:0.2px #00009a;">lib/</div><div class="t" style="left:-2px;width:200px;text-align:right;top:98px;color:#00009a;-webkit-text-stroke:0.2px #00009a;">3,331</div><div class="t" style="left:203px;top:98px;color:#00009a;-webkit-text-stroke:0.2px #00009a;letter-spacing:0.2px">drwxr-xr-x</div>
<div class="t" style="left:4px;top:114px;color:#00009a;-webkit-text-stroke:0.2px #00009a;">mnt/</div><div class="t" style="left:-2px;width:200px;text-align:right;top:114px;color:#00009a;-webkit-text-stroke:0.2px #00009a;">160</div><div class="t" style="left:203px;top:114px;color:#00009a;-webkit-text-stroke:0.2px #00009a;letter-spacing:0.2px">drwxr-xr-x</div>
<div class="t" style="left:4px;top:130px;color:#00009a;-webkit-text-stroke:0.2px #00009a;">opt/</div><div class="t" style="left:-2px;width:200px;text-align:right;top:130px;color:#00009a;-webkit-text-stroke:0.2px #00009a;">38</div><div class="t" style="left:203px;top:130px;color:#00009a;-webkit-text-stroke:0.2px #00009a;letter-spacing:0.2px">drwxr-xr-x</div>
<div class="t" style="left:4px;top:146px;color:#00009a;-webkit-text-stroke:0.2px #00009a;">proc/</div><div class="t" style="left:-2px;width:200px;text-align:right;top:146px;color:#00009a;-webkit-text-stroke:0.2px #00009a;">0</div><div class="t" style="left:203px;top:146px;color:#00009a;-webkit-text-stroke:0.2px #00009a;letter-spacing:0.2px">dr-xr-xr-x</div>
<div class="t" style="left:4px;top:162px;color:#00009a;-webkit-text-stroke:0.2px #00009a;">root/</div><div class="t" style="left:-2px;width:200px;text-align:right;top:162px;color:#00009a;-webkit-text-stroke:0.2px #00009a;">140</div><div class="t" style="left:203px;top:162px;color:#00009a;-webkit-text-stroke:0.2px #00009a;letter-spacing:0.2px">drwxr-xr-x</div>
<div class="t" style="left:4px;top:178px;color:#00009a;-webkit-text-stroke:0.2px #00009a;">sbin/</div><div class="t" style="left:-2px;width:200px;text-align:right;top:178px;color:#00009a;-webkit-text-stroke:0.2px #00009a;">4,191</div><div class="t" style="left:203px;top:178px;color:#00009a;-webkit-text-stroke:0.2px #00009a;letter-spacing:0.2px">drwxr-xr-x</div>
<div class="t" style="left:4px;top:194px;color:#00009a;-webkit-text-stroke:0.2px #00009a;">sys/</div><div class="t" style="left:-2px;width:200px;text-align:right;top:194px;color:#00009a;-webkit-text-stroke:0.2px #00009a;">0</div><div class="t" style="left:203px;top:194px;color:#00009a;-webkit-text-stroke:0.2px #00009a;letter-spacing:0.2px">drwxr-xr-x</div>
<div class="t" style="left:4px;top:210px;color:#00009a;-webkit-text-stroke:0.2px #00009a;">tftpboot/</div><div class="t" style="left:-2px;width:200px;text-align:right;top:210px;color:#00009a;-webkit-text-stroke:0.2px #00009a;">53</div><div class="t" style="left:203px;top:210px;color:#00009a;-webkit-text-stroke:0.2px #00009a;letter-spacing:0.2px">drwxr-xr-x</div>
<div class="t" style="left:4px;top:226px;color:#00009a;-webkit-text-stroke:0.2px #00009a;">tmp/</div><div class="t" style="left:-2px;width:200px;text-align:right;top:226px;color:#00009a;-webkit-text-stroke:0.2px #00009a;">120</div><div class="t" style="left:203px;top:226px;color:#00009a;-webkit-text-stroke:0.2px #00009a;letter-spacing:0.2px">drwxrwxrwt</div>
<div class="t" style="left:4px;top:242px;color:#00009a;-webkit-text-stroke:0.2px #00009a;">usr/</div><div class="t" style="left:-2px;width:200px;text-align:right;top:242px;color:#00009a;-webkit-text-stroke:0.2px #00009a;">232</div><div class="t" style="left:203px;top:242px;color:#00009a;-webkit-text-stroke:0.2px #00009a;letter-spacing:0.2px">drwxr-xr-x</div>
<div class="t" style="left:4px;top:258px;color:#00009a;-webkit-text-stroke:0.2px #00009a;">var/</div><div class="t" style="left:-2px;width:200px;text-align:right;top:258px;color:#00009a;-webkit-text-stroke:0.2px #00009a;">100</div><div class="t" style="left:203px;top:258px;color:#00009a;-webkit-text-stroke:0.2px #00009a;letter-spacing:0.2px">drwxr-xr-x</div>
</div>
<div class="a" style="left:683px;top:541px;width:16px;height:288px;background:#c9c7c2;border:1px solid #9a9690;border-right-color:#fff;border-bottom-color:#fff"></div>
<div class="a" style="left:684px;top:542px;width:14px;height:13px;background:#dcdad5;border-top:1px solid #fff;border-left:1px solid #fff;border-bottom:1px solid #000;border-right:1px solid #000;"></div>
<svg class="a" style="left:686px;top:545px" width="9" height="6"><path d="M0 5 L4 0 L8 5 Z" fill="#888"/></svg>
<div class="a" style="left:684px;top:555px;width:14px;height:249px;background:#dcdad5;border-top:1px solid #fff;border-left:1px solid #fff;border-bottom:1px solid #000;border-right:1px solid #000;"></div>
<div class="a" style="left:684px;top:815px;width:14px;height:13px;background:#dcdad5;border-top:1px solid #fff;border-left:1px solid #fff;border-bottom:1px solid #000;border-right:1px solid #000;"></div>
<svg class="a" style="left:686px;top:819px" width="9" height="6"><path d="M0 0 L8 0 L4 5 Z" fill="#000"/></svg>
<div class="a" style="left:414px;top:833px;width:266px;height:16px;background:#c9c7c2;border:1px solid #9a9690;border-right-color:#fff;border-bottom-color:#fff"></div>
<div class="a" style="left:415px;top:834px;width:14px;height:14px;background:#dcdad5;border-top:1px solid #fff;border-left:1px solid #fff;border-bottom:1px solid #000;border-right:1px solid #000;"></div>
<svg class="a" style="left:418px;top:836px" width="6" height="9"><path d="M5 0 L0 4 L5 8 Z" fill="#888"/></svg>
<div class="a" style="left:429px;top:834px;width:81px;height:14px;background:#dcdad5;border-top:1px solid #fff;border-left:1px solid #fff;border-bottom:1px solid #000;border-right:1px solid #000;"></div>
<div class="a" style="left:665px;top:834px;width:14px;height:14px;background:#dcdad5;border-top:1px solid #fff;border-left:1px solid #fff;border-bottom:1px solid #000;border-right:1px solid #000;"></div>
<svg class="a" style="left:669px;top:836px" width="6" height="9"><path d="M0 0 L5 4 L0 8 Z" fill="#000"/></svg>
<div class="a" style="left:59px;top:855px;width:640px;height:64px;background:#fff;border:1px solid #f4f4f4;border-right-color:#000;border-bottom-color:#000"></div>
<div class="a" style="left:59px;top:919px;width:10px;height:32px;background:#dcdad5"></div>
<div class="a" style="left:59px;top:919px;width:1px;height:32px;background:#fff"></div>
<div class="a" style="left:59px;top:919px;width:9px;height:1px;background:#fff"></div>
<svg class="a" style="left:61px;top:921px" width="6" height="29"><path fill="#fff" d="M0 0h1v1h-1zM1 1h1v1h-1zM0 3h1v1h-1zM1 4h1v1h-1zM0 6h1v1h-1zM1 7h1v1h-1zM0 9h1v1h-1zM1 10h1v1h-1zM0 12h1v1h-1zM1 13h1v1h-1zM0 15h1v1h-1zM1 16h1v1h-1zM0 18h1v1h-1zM1 19h1v1h-1zM0 21h1v1h-1zM1 22h1v1h-1zM0 24h1v1h-1zM1 25h1v1h-1zM0 27h1v1h-1zM1 28h1v1h-1zM3 1h1v1h-1zM4 2h1v1h-1zM3 4h1v1h-1zM4 5h1v1h-1zM3 7h1v1h-1zM4 8h1v1h-1zM3 10h1v1h-1zM4 11h1v1h-1zM3 13h1v1h-1zM4 14h1v1h-1zM3 16h1v1h-1zM4 17h1v1h-1zM3 19h1v1h-1zM4 20h1v1h-1zM3 22h1v1h-1zM4 23h1v1h-1zM3 25h1v1h-1zM4 26h1v1h-1zM3 28h1v1h-1z"/></svg>
<div class="a" style="left:68px;top:919px;width:1px;height:32px;background:#000"></div>
<div class="a" style="left:69px;top:919px;width:630px;height:32px;background:#dcdad5;border-top:1px solid #fff;border-left:1px solid #fff;border-bottom:1px solid #000;border-right:1px solid #000;"></div>
<svg class="a" style="left:76px;top:927px" width="17" height="17"><circle cx="6.5" cy="6.5" r="5.8" fill="#f2f2f0" stroke="#333" stroke-width="1.1"/><path d="M3.5 5.5V3.5h2M7.5 3.5h2v2M9.5 7.5v2h-2M5.5 9.5h-2v-2" stroke="#333" stroke-width="1" fill="none"/><path d="M11 11 L15.5 15.5" stroke="#333" stroke-width="2.4"/></svg>
<svg class="a" style="left:104px;top:926px" width="17" height="18"><rect x="1" y="1" width="13" height="16" fill="#c8b830" stroke="#7a6a10" stroke-width="0.8"/><rect x="2" y="12" width="11" height="4" fill="#cde"/><path d="M9 4 L14 4 L14 10 L17 10 L11.5 17 L6 10 L9 10 Z" fill="#e03020" stroke="#901010" stroke-width="0.6"/></svg>
<svg class="a" style="left:131px;top:926px" width="16" height="18"><circle cx="8" cy="4" r="3.5" fill="#8ac050" stroke="#4a8020" stroke-width="0.8"/><rect x="6" y="6" width="4" height="4" fill="#8ac050"/><rect x="2" y="9" width="12" height="4" fill="#9ac060" stroke="#4a8020" stroke-width="0.6"/><rect x="2" y="12" width="12" height="2" fill="#8a9ab0"/><path d="M2 14 L14 14 L15 17 L1 17 Z" fill="#e8d050"/></svg>
<div class="a" style="left:154px;top:922px;width:234px;height:27px;background:#fff;border-top:1px solid #000;border-left:1px solid #000;border-bottom:1px solid #f6f5f3;border-right:1px solid #f6f5f3;"></div>
<div class="a" style="left:388px;top:921px;width:25px;height:28px;background:#dcdad5;border-top:1px solid #fff;border-left:1px solid #fff;border-bottom:1px solid #000;border-right:1px solid #000;"></div>
<svg class="a" style="left:396px;top:932px" width="10" height="6"><path d="M0 0 L9 0 L4.5 5 Z" fill="#000"/></svg>
<svg class="a" style="left:417px;top:927px" width="20" height="17"><path d="M3 6 L14 2 L19 4 L8 9 Z" fill="#8ac040" stroke="#4a7a20" stroke-width="0.6"/><path d="M3 6 L8 9 L8 11 L3 8 Z" fill="#e8d040"/><path d="M1 12h16M1 15h18" stroke="#aaa"/></svg>
<svg class="a" style="left:445px;top:926px" width="19" height="19"><ellipse cx="9.5" cy="8.5" rx="8.5" ry="7.5" fill="#fff" stroke="#777"/><path d="M12 17 L10 15" stroke="#777"/><circle cx="11" cy="4" r="1.6" fill="#2a9a2a"/><path d="M10 6 L8 10 L5 12 M8 10 L11 12 L12 15 M9 7 L13 9 M9 7 L5 8" stroke="#2a9a2a" stroke-width="1.6" fill="none"/></svg>
<svg class="a" style="left:473px;top:926px" width="19" height="19"><path d="M1 18 L1 9 L8 18 Z" fill="none" stroke="#2a2a9a" stroke-width="1.6"/><circle cx="12" cy="7" r="6" fill="#e02020"/><path d="M12 7 L18 7 A6 6 0 0 1 12 13 Z" fill="#30b030"/></svg>
<svg class="a" style="left:502px;top:927px" width="17" height="17"><circle cx="6.5" cy="6.5" r="5" fill="#e8f0f8" stroke="#666" stroke-width="1.2"/><path d="M10 10 L16 16" stroke="#555" stroke-width="2.5"/></svg>
<svg class="a" style="left:528px;top:927px" width="18" height="16"><rect x="0.5" y="0.5" width="17" height="15" fill="#d8c890" stroke="#8a7a40"/><rect x="2" y="2" width="14" height="12" fill="#1a4a2a"/><path d="M4 5h3" stroke="#fff"/></svg>
<svg class="a" style="left:556px;top:926px" width="18" height="18"><circle cx="5" cy="5" r="4" fill="none" stroke="#d0a020" stroke-width="2.4"/><path d="M8 8 L17 17 M12 12 L10 14 M14 14 L12 16" stroke="#d0a020" stroke-width="2.4"/></svg>
<svg class="a" style="left:584px;top:927px" width="19" height="17"><path d="M9 8 L17 3 A8 7 0 1 0 17 12 Z" fill="#4aa030" stroke="#2a6a10" stroke-width="0.6"/><path d="M13 11 L18 12 L16 16 Z" fill="#e02020"/></svg>
<div class="a" style="left:609px;top:927px;width:1px;height:18px;background:#a8a6a1;box-shadow:1px 0 #fff"></div>
<svg class="a" style="left:618px;top:927px" width="17" height="17"><path d="M3 3 L14 14" stroke="#888" stroke-width="2.5"/><circle cx="13" cy="4" r="3" fill="none" stroke="#888" stroke-width="1.6"/><path d="M12 5 L5 12" stroke="#999" stroke-width="2"/><path d="M5 12 L1 16" stroke="#3a7ad0" stroke-width="3" stroke-linecap="round"/></svg>
<svg class="a" style="left:643px;top:926px" width="18" height="18"><circle cx="9" cy="9" r="7.5" fill="none" stroke="#e8e0d0" stroke-width="4"/><circle cx="9" cy="9" r="7.5" fill="none" stroke="#e03020" stroke-width="4" stroke-dasharray="4 7.8"/><circle cx="9" cy="9" r="8.5" fill="none" stroke="#b08040" stroke-width="0.8"/></svg>
<div class="a" style="left:667px;top:927px;width:1px;height:18px;background:#a8a6a1;box-shadow:1px 0 #fff"></div>
<svg class="a" style="left:675px;top:927px" width="17" height="17"><rect x="9" y="1" width="7" height="15" fill="#3a8a4a" stroke="#1a3a1a"/><path d="M1 6 L5 6 L5 3 L10 8.5 L5 14 L5 11 L1 11 Z" fill="#e02020" stroke="#801010" stroke-width="0.6"/></svg>
<div class="t" style="left:68px;top:951px;">root</div>
<div class="t" style="left:103px;top:951px;">:::</div>
<div class="t" style="left:116px;top:951px;letter-spacing:-0.2px">0 selected item(s) of 17 in /</div>
<div class="a" style="left:699px;top:483px;width:4px;height:484px;background:#dcdad5"></div>
<div class="a" style="left:701px;top:483px;width:1px;height:484px;background:#eceae6"></div>

<!-- ================= TASKBAR ================= -->
<div class="a" style="left:0px;top:988px;width:1280px;height:36px;background:#dcdad5"></div>
<div class="a" style="left:0px;top:988px;width:1280px;height:1px;background:#bdb8ae"></div>
<div class="a" style="left:0px;top:989px;width:1280px;height:1px;background:#fff"></div>
<svg class="a" style="left:4px;top:994px" width="26" height="26"><defs><radialGradient id="gold" cx="0.35" cy="0.3" r="0.8"><stop offset="0" stop-color="#f8ecb0"/><stop offset="0.5" stop-color="#e0c060"/><stop offset="1" stop-color="#b89030"/></radialGradient></defs><circle cx="12.5" cy="12.5" r="12" fill="url(#gold)" stroke="#c8a848" stroke-width="0.6"/><circle cx="12.5" cy="12.5" r="3.5" fill="#dcdad5" stroke="#e8d898"/></svg>
<div class="a" style="left:40px;top:995px;width:1px;height:23px;background:#fff;box-shadow:-1px 0 #b8b4ac"></div>
<svg class="a" style="left:48px;top:994px" width="28" height="23"><path d="M2 10 L5 5 L20 5 L23 10 Z" fill="#c8ccd8" stroke="#888"/><rect x="1" y="10" width="23" height="11" rx="1.5" fill="#e8eaf0" stroke="#888"/><rect x="3" y="16" width="8" height="2" fill="#aaa"/><rect x="12" y="1" width="4" height="4" fill="#3a5ad0"/><rect x="10" y="4" width="4" height="4" fill="#e02020"/><rect x="15" y="3" width="4" height="4" fill="#f0d020"/><path d="M22 6 L27 9 L27 15 L22 18 L17 15 L17 9 Z" fill="#b8b8f0" stroke="#5a5aa0" stroke-width="0.8"/><circle cx="22" cy="10" r="1.6" fill="#fff"/><circle cx="19.5" cy="14" r="1.6" fill="#fff"/><circle cx="24.5" cy="14" r="1.6" fill="#fff"/></svg>
<svg class="a" style="left:81px;top:996px" width="28" height="22"><rect x="0.5" y="0.5" width="27" height="21" rx="1" fill="#3a3a3a" stroke="#262626"/><rect x="1.5" y="1.5" width="25" height="2" fill="#f2f2f2"/><polygon points="2,4 26,4 9,20.5 2,20.5" fill="#8c8c8c"/><path d="M3 20.5h23" stroke="#555"/><text x="3.5" y="18" font-family="Liberation Sans" font-weight="bold" font-size="18" fill="#fff">$</text></svg>
<svg class="a" style="left:115px;top:993px" width="28" height="28"><defs><radialGradient id="ffb2" cx="0.6" cy="0.35" r="0.65"><stop offset="0" stop-color="#3cc8f8"/><stop offset="0.6" stop-color="#1a6ac8"/><stop offset="1" stop-color="#0a2a80"/></radialGradient><linearGradient id="ffo2" x1="0.2" y1="0" x2="0.8" y2="1"><stop offset="0" stop-color="#f89a20"/><stop offset="0.5" stop-color="#e85010"/><stop offset="1" stop-color="#b81808"/></linearGradient></defs><circle cx="14" cy="13.5" r="12" fill="url(#ffb2)"/><path d="M3 9 Q1 17 6 22 Q12 27 19 25.5 Q25 23.5 26.5 17 Q27 11 24 6 Q26 12 24 16 Q21 21 15 21 Q10 20.5 8.5 16 Q10 18 13 18 Q9 15 11 11 Q12 9 14 8.5 L12 6 L10 8 Q8 4 9 2 Q5 4 4.5 7 Z" fill="url(#ffo2)"/><path d="M24 6 Q27 10 26.5 15" stroke="#f8d040" stroke-width="1.5" fill="none"/></svg>
<svg class="a" style="left:150px;top:994px" width="28" height="27"><defs><radialGradient id="lmp" cx="0.4" cy="0.35" r="0.7"><stop offset="0" stop-color="#fff8a0"/><stop offset="0.6" stop-color="#f0dc40"/><stop offset="1" stop-color="#c8a818"/></radialGradient></defs><path d="M2.5 1.5 Q5.5 3 3.5 6 Q1.5 8.5 3.5 11" stroke="#f4f4f4" stroke-width="3.2" fill="none" stroke-linecap="round"/><path d="M19 6.5 Q27 4 26.5 11 Q26 18 18 19" stroke="#e0c030" stroke-width="2.4" fill="none"/><ellipse cx="12.5" cy="22.5" rx="8.5" ry="2.8" fill="#f0d838" stroke="#c8a820" stroke-width="0.7"/><path d="M2.5 10 Q3 20.5 12.5 21 Q21 20.5 20.5 10 Q12 6.5 2.5 10 Z" fill="url(#lmp)" stroke="#c8a820" stroke-width="0.7"/><ellipse cx="11.5" cy="8.5" rx="8" ry="2.5" fill="#f4e050" stroke="#c8a820" stroke-width="0.6"/><circle cx="12" cy="6.5" r="2.2" fill="#f4e870" stroke="#c8a820" stroke-width="0.6"/><path d="M7 12.5 l1.6 2.8 -1.6 2.8 -1.6 -2.8Z M12.5 13 l1.8 3.2 -1.8 3.2 -1.8 -3.2Z M17.5 12.5 l1.6 2.8 -1.6 2.8 -1.6 -2.8Z" fill="#c83a28"/></svg>
<svg class="a" style="left:184px;top:994px" width="27" height="26"><defs><linearGradient id="slv" x1="0" y1="0" x2="1" y2="1"><stop offset="0" stop-color="#f8f8f8"/><stop offset="0.4" stop-color="#c8c8d0"/><stop offset="0.6" stop-color="#f0f0f0"/><stop offset="1" stop-color="#b8b8c0"/></linearGradient></defs><circle cx="13" cy="13" r="12" fill="url(#slv)" stroke="#909090" stroke-width="1"/><circle cx="13" cy="13" r="3" fill="#e8e8e8" stroke="#aaa" stroke-width="0.8"/><rect x="14" y="1.5" width="10" height="12" fill="#f2f2f2" stroke="#e0e0e0" stroke-width="0.5"/><circle cx="23" cy="3.5" r="3" fill="#f0f050"/></svg>
<svg class="a" style="left:218px;top:993px" width="28" height="27" viewBox="0 0 28 27"><path d="M1.5 7 L20 1.5 L23 3 L25.5 20 L4 26 Z" fill="#e0c858" stroke="#8a7a28" stroke-width="0.8"/><path d="M2.5 9 L22 4 L24.5 21" fill="none" stroke="#f4e8a0" stroke-width="1"/><path d="M3.5 11 L23 6 L26 9 L26 22 L4.5 26.5 Z" fill="#e8d468" stroke="#8a7a28" stroke-width="0.8"/><path d="M5.5 17.5 L15 15 Q16.5 10 11.5 10 Q5 10.5 4 17 Q3.5 23.5 9.5 23 Q12.5 22.5 14.5 20.5" stroke="#1a1ab8" stroke-width="2.2" fill="none"/><path d="M14.5 11.5 Q17 7.5 21 8 Q25 9 22.5 13 Q20 16.5 13.5 21.5 L25.5 19.5" stroke="#1a1ab8" stroke-width="2.2" fill="none"/></svg>
<svg class="a" style="left:250px;top:994px" width="5" height="27"><path fill="#fff" d="M0 0h1v1h-1zM1 1h1v1h-1zM0 3h1v1h-1zM1 4h1v1h-1zM0 6h1v1h-1zM1 7h1v1h-1zM0 9h1v1h-1zM1 10h1v1h-1zM0 12h1v1h-1zM1 13h1v1h-1zM0 15h1v1h-1zM1 16h1v1h-1zM0 18h1v1h-1zM1 19h1v1h-1zM0 21h1v1h-1zM1 22h1v1h-1zM0 24h1v1h-1zM1 25h1v1h-1zM3 1h1v1h-1zM3 4h1v1h-1zM3 7h1v1h-1zM3 10h1v1h-1zM3 13h1v1h-1zM3 16h1v1h-1zM3 19h1v1h-1zM3 22h1v1h-1zM3 25h1v1h-1z"/></svg>
<svg class="a" style="left:259px;top:1000px" width="17" height="14"><rect x="0.5" y="0.5" width="16" height="13" fill="#3a3a3a" stroke="#2a2a2a"/><rect x="1" y="1" width="15" height="1.5" fill="#ddd"/><polygon points="1,2.5 16,2.5 6,13 1,13" fill="#8a8a8a"/><text x="2" y="11.5" font-family="Liberation Sans" font-weight="bold" font-size="11" fill="#fff">$</text></svg>
<div class="t" style="left:346px;top:1002px;letter-spacing:-0.4px">Terminal</div>
<svg class="a" style="left:459px;top:1001px" width="17" height="14"><rect x="0.5" y="0.5" width="16" height="13" rx="1" fill="#555" stroke="#333"/><rect x="2" y="2" width="13" height="8" fill="#e8e8e8"/><path d="M2 6 Q6 1 15 3 L15 6 Z" fill="#7cc45a"/><path d="M2 6 Q4 3 7 3 L6 6 Z" fill="#f08a30"/><ellipse cx="11" cy="8" rx="2.5" ry="1.5" fill="#d33"/></svg>
<div class="t" style="left:521px;top:1002px;letter-spacing:-0.3px">/dev/sda - GParted</div>
<div class="a" style="left:656px;top:991px;width:200px;height:33px;background:#c6c4be;border-top:1px solid #000;border-left:1px solid #000;border-right:1px solid #fff"></div>
<svg class="a" style="left:659px;top:999px" width="16" height="16" viewBox="0 0 28 27"><path d="M1.5 7 L20 1.5 L23 3 L25.5 20 L4 26 Z" fill="#e0c858" stroke="#8a7a28" stroke-width="0.8"/><path d="M2.5 9 L22 4 L24.5 21" fill="none" stroke="#f4e8a0" stroke-width="1"/><path d="M3.5 11 L23 6 L26 9 L26 22 L4.5 26.5 Z" fill="#e8d468" stroke="#8a7a28" stroke-width="0.8"/><path d="M5.5 17.5 L15 15 Q16.5 10 11.5 10 Q5 10.5 4 17 Q3.5 23.5 9.5 23 Q12.5 22.5 14.5 20.5" stroke="#1a1ab8" stroke-width="2.2" fill="none"/><path d="M14.5 11.5 Q17 7.5 21 8 Q25 9 22.5 13 Q20 16.5 13.5 21.5 L25.5 19.5" stroke="#1a1ab8" stroke-width="2.2" fill="none"/></svg>
<div class="t" style="left:744px;top:1002px;letter-spacing:-0.3px">emelFM2</div>
<div class="a" style="left:1164px;top:991px;width:18px;height:15px;background:#3c4856"></div>
<div class="a" style="left:1183px;top:991px;width:18px;height:15px;background:#a8a49d"></div>
<div class="a" style="left:1164px;top:1007px;width:18px;height:16px;background:#a8a49d"></div>
<div class="a" style="left:1183px;top:1007px;width:18px;height:16px;background:#a8a49d"></div>
<svg class="a" style="left:1164px;top:991px" width="18" height="15"><rect x="7" y="1.5" width="9" height="6" fill="#dcd8cc" stroke="#fff"/><rect x="4" y="4.5" width="9" height="6" fill="#dcd8cc" stroke="#fff"/><rect x="1.5" y="7.5" width="8" height="6" fill="#4a6888" stroke="#fff"/></svg>
<div class="a" style="left:1204px;top:992px;width:9px;height:31px;background:#e4e2de;border-top:1px solid #000;border-left:1px solid #000;border-right:1px solid #fff;box-shadow:inset 1px 0 #555"></div>
<div class="t" style="left:1226px;top:994px;letter-spacing:0.1px">23:51:08</div>
<div class="t" style="left:1219px;top:1008px;letter-spacing:0.1px">2009-05-12</div>
</div></body></html>
